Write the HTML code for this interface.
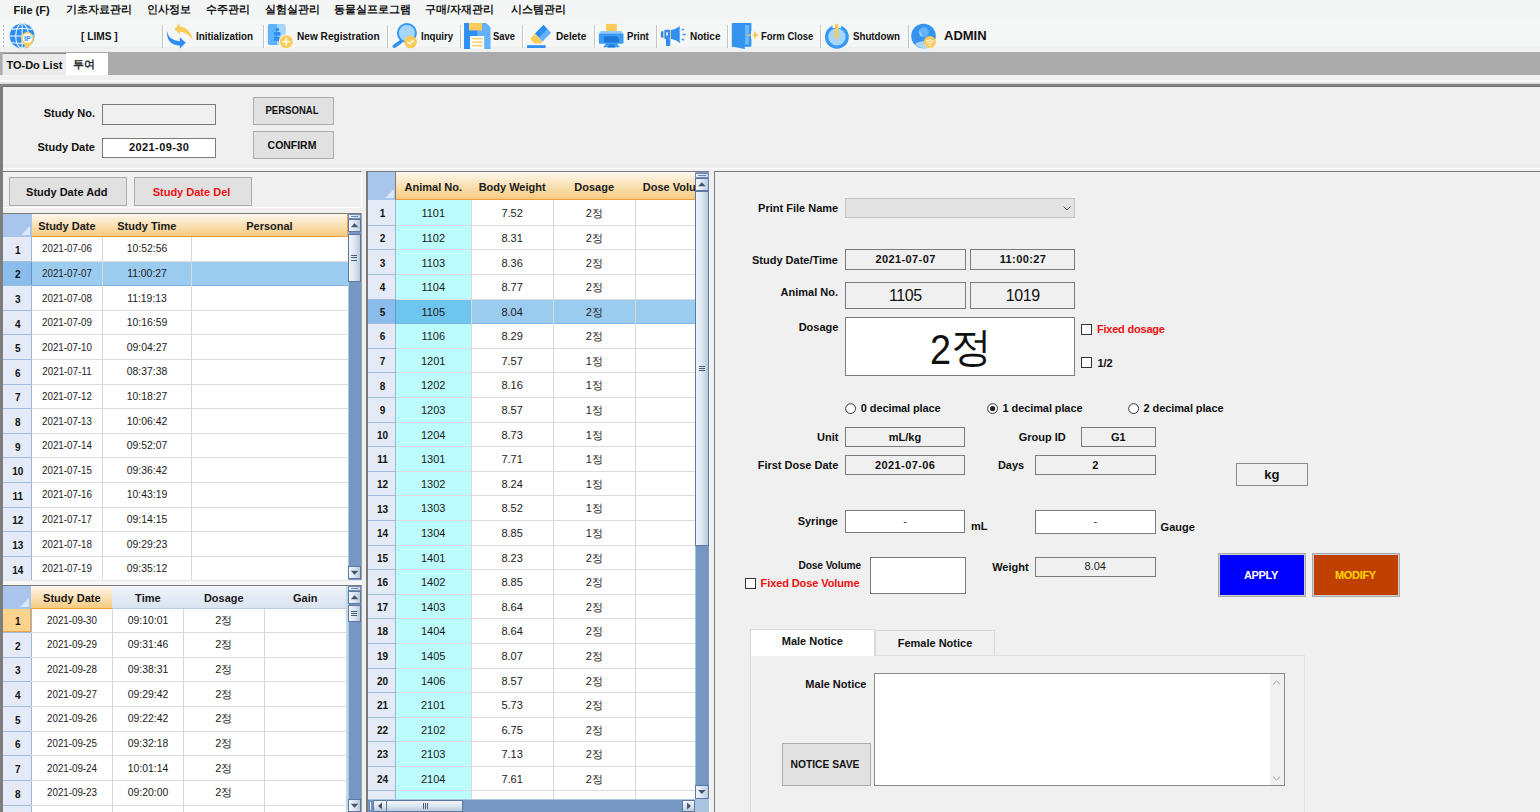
<!DOCTYPE html>
<html><head><meta charset="utf-8"><title>LIMS</title>
<style>
html,body{margin:0;padding:0;}
body{width:1540px;height:812px;overflow:hidden;position:relative;background:#f0f0f0;font-family:"Liberation Sans",sans-serif;}
div{box-sizing:border-box;}
</style></head><body>

<div style="position:absolute;left:0px;top:0px;width:1540px;height:20px;background:#f4f5f5;"></div>
<div style="position:absolute;left:13.6px;top:3.95px;line-height:12.287px;font-size:11px;font-weight:bold;color:#111;white-space:pre;">File (F)</div>
<div style="position:absolute;left:66px;top:4.31px;line-height:11.84px;font-size:10.6px;font-weight:bold;color:#111;white-space:pre;">기초자료관리</div>
<div style="position:absolute;left:146.5px;top:4.31px;line-height:11.84px;font-size:10.6px;font-weight:bold;color:#111;white-space:pre;">인사정보</div>
<div style="position:absolute;left:205.5px;top:4.31px;line-height:11.84px;font-size:10.6px;font-weight:bold;color:#111;white-space:pre;">수주관리</div>
<div style="position:absolute;left:264.5px;top:4.31px;line-height:11.84px;font-size:10.6px;font-weight:bold;color:#111;white-space:pre;">실험실관리</div>
<div style="position:absolute;left:334px;top:4.31px;line-height:11.84px;font-size:10.6px;font-weight:bold;color:#111;white-space:pre;">동물실프로그램</div>
<div style="position:absolute;left:425px;top:4.31px;line-height:11.84px;font-size:10.6px;font-weight:bold;color:#111;white-space:pre;">구매/자재관리</div>
<div style="position:absolute;left:511px;top:4.31px;line-height:11.84px;font-size:10.6px;font-weight:bold;color:#111;white-space:pre;">시스템관리</div>
<div style="position:absolute;left:0px;top:20px;width:1540px;height:32px;background:#f5f6f6;"></div>
<div style="position:absolute;left:0px;top:47px;width:1540px;height:5px;background:#eff0f0;"></div>
<div style="position:absolute;left:3px;top:25px;width:1px;height:2px;background:#b0b0b0;"></div>
<div style="position:absolute;left:3px;top:29px;width:1px;height:2px;background:#b0b0b0;"></div>
<div style="position:absolute;left:3px;top:33px;width:1px;height:2px;background:#b0b0b0;"></div>
<div style="position:absolute;left:3px;top:37px;width:1px;height:2px;background:#b0b0b0;"></div>
<div style="position:absolute;left:3px;top:41px;width:1px;height:2px;background:#b0b0b0;"></div>
<div style="position:absolute;left:3px;top:45px;width:1px;height:2px;background:#b0b0b0;"></div>
<div style="position:absolute;left:161.8px;top:24.7px;width:1px;height:23.5px;background:#c4c4c4;"></div>
<div style="position:absolute;left:162.8px;top:24.7px;width:1px;height:23.5px;background:#ffffff;"></div>
<div style="position:absolute;left:262.8px;top:24.7px;width:1px;height:23.5px;background:#c4c4c4;"></div>
<div style="position:absolute;left:263.8px;top:24.7px;width:1px;height:23.5px;background:#ffffff;"></div>
<div style="position:absolute;left:386.8px;top:24.7px;width:1px;height:23.5px;background:#c4c4c4;"></div>
<div style="position:absolute;left:387.8px;top:24.7px;width:1px;height:23.5px;background:#ffffff;"></div>
<div style="position:absolute;left:460px;top:24.7px;width:1px;height:23.5px;background:#c4c4c4;"></div>
<div style="position:absolute;left:461px;top:24.7px;width:1px;height:23.5px;background:#ffffff;"></div>
<div style="position:absolute;left:522.3px;top:24.7px;width:1px;height:23.5px;background:#c4c4c4;"></div>
<div style="position:absolute;left:523.3px;top:24.7px;width:1px;height:23.5px;background:#ffffff;"></div>
<div style="position:absolute;left:593.9px;top:24.7px;width:1px;height:23.5px;background:#c4c4c4;"></div>
<div style="position:absolute;left:594.9px;top:24.7px;width:1px;height:23.5px;background:#ffffff;"></div>
<div style="position:absolute;left:655.7px;top:24.7px;width:1px;height:23.5px;background:#c4c4c4;"></div>
<div style="position:absolute;left:656.7px;top:24.7px;width:1px;height:23.5px;background:#ffffff;"></div>
<div style="position:absolute;left:727.3px;top:24.7px;width:1px;height:23.5px;background:#c4c4c4;"></div>
<div style="position:absolute;left:728.3px;top:24.7px;width:1px;height:23.5px;background:#ffffff;"></div>
<div style="position:absolute;left:819.8px;top:24.7px;width:1px;height:23.5px;background:#c4c4c4;"></div>
<div style="position:absolute;left:820.8px;top:24.7px;width:1px;height:23.5px;background:#ffffff;"></div>
<div style="position:absolute;left:907.9px;top:24.7px;width:1px;height:23.5px;background:#c4c4c4;"></div>
<div style="position:absolute;left:908.9px;top:24.7px;width:1px;height:23.5px;background:#ffffff;"></div>
<div style="position:absolute;left:81.4px;top:30.05px;line-height:12.287px;font-size:11px;font-weight:bold;color:#111;white-space:pre;transform:scaleX(0.922);transform-origin:0 0;">[ LIMS ]</div>
<div style="position:absolute;left:195.5px;top:30.05px;line-height:12.287px;font-size:11px;font-weight:bold;color:#111;white-space:pre;transform:scaleX(0.896);transform-origin:0 0;">Initialization</div>
<div style="position:absolute;left:296.6px;top:30.05px;line-height:12.287px;font-size:11px;font-weight:bold;color:#111;white-space:pre;transform:scaleX(0.919);transform-origin:0 0;">New Registration</div>
<div style="position:absolute;left:420.7px;top:30.05px;line-height:12.287px;font-size:11px;font-weight:bold;color:#111;white-space:pre;transform:scaleX(0.877);transform-origin:0 0;">Inquiry</div>
<div style="position:absolute;left:493px;top:30.05px;line-height:12.287px;font-size:11px;font-weight:bold;color:#111;white-space:pre;transform:scaleX(0.856);transform-origin:0 0;">Save</div>
<div style="position:absolute;left:555.7px;top:30.05px;line-height:12.287px;font-size:11px;font-weight:bold;color:#111;white-space:pre;transform:scaleX(0.918);transform-origin:0 0;">Delete</div>
<div style="position:absolute;left:626.8px;top:30.05px;line-height:12.287px;font-size:11px;font-weight:bold;color:#111;white-space:pre;transform:scaleX(0.869);transform-origin:0 0;">Print</div>
<div style="position:absolute;left:689.6px;top:30.05px;line-height:12.287px;font-size:11px;font-weight:bold;color:#111;white-space:pre;transform:scaleX(0.905);transform-origin:0 0;">Notice</div>
<div style="position:absolute;left:760.7px;top:30.05px;line-height:12.287px;font-size:11px;font-weight:bold;color:#111;white-space:pre;transform:scaleX(0.864);transform-origin:0 0;">Form Close</div>
<div style="position:absolute;left:853px;top:30.05px;line-height:12.287px;font-size:11px;font-weight:bold;color:#111;white-space:pre;transform:scaleX(0.883);transform-origin:0 0;">Shutdown</div>
<div style="position:absolute;left:944px;top:29.44px;line-height:14.521px;font-size:13px;font-weight:bold;color:#111;white-space:pre;">ADMIN</div>
<svg style="position:absolute;left:0;top:0" width="1540" height="52" viewBox="0 0 1540 52">
<!-- globe -->
<g>
<circle cx="22.1" cy="35.9" r="12.4" fill="#2f8ef3"/>
<g fill="none" stroke="#eaf4ff" stroke-width="1.1">
<line x1="22.1" y1="23.5" x2="22.1" y2="48.3"/>
<ellipse cx="22.1" cy="35.9" rx="6.4" ry="12.4"/>
<line x1="9.7" y1="36" x2="34.5" y2="36"/>
<path d="M12 29.4 Q22.1 27.5 32.2 29.4"/>
<path d="M12 42.5 Q22.1 44.3 32.2 42.5"/>
</g>
<path d="M21.2 39.5 A6.3 6.3 0 1 1 33.6 39.5 Q33 43 27.4 48.6 Q21.8 43 21.2 39.5 Z" fill="#fdcb5a"/>
<circle cx="27.4" cy="38.2" r="4.9" fill="#fff"/>
<text x="27.4" y="40.6" font-family="Liberation Sans" font-weight="bold" font-size="7.2" fill="#2f8ef3" text-anchor="middle">IP</text>
</g>
<!-- refresh -->
<path d="M174.4 28.9 L179.8 23.3 L179.8 26.4 Q190.5 27.5 192.7 40.6 Q188.5 32.5 179.8 31.6 L179.8 34.6 Z" fill="#fdcb5a"/>
<path d="M166.9 31 Q168.3 40.5 179.8 41.2 L179.8 37.3 L185.8 42.8 L179.8 48.5 L179.8 45.6 Q166.5 45 166.9 31 Z" fill="#2f8ef3"/>
<!-- new registration -->
<rect x="267.9" y="23.9" width="17.9" height="21.1" rx="2.2" fill="#a6d6fb"/>
<path d="M270.1 23.9 L277 23.9 L277 45 L270.1 45 Q267.9 45 267.9 42.8 L267.9 26.1 Q267.9 23.9 270.1 23.9 Z" fill="#5fb3f9"/>
<circle cx="277.3" cy="29.6" r="1.9" fill="#2f8ef3"/>
<rect x="274.1" y="32.1" width="6.4" height="3.6" rx="1.2" fill="#2f8ef3"/>
<rect x="274.1" y="36.6" width="5.5" height="4.3" fill="#2f8ef3"/>
<circle cx="286.3" cy="41.7" r="7.4" fill="#f5f6f6"/>
<circle cx="286.3" cy="41.7" r="6.5" fill="#fdcb5a"/>
<rect x="282.4" y="41" width="7.8" height="1.5" fill="#fff"/>
<rect x="285.55" y="37.8" width="1.5" height="7.8" fill="#fff"/>
<!-- inquiry -->
<line x1="401" y1="41.5" x2="394.2" y2="46.3" stroke="#2f8ef3" stroke-width="3.4" stroke-linecap="round"/>
<circle cx="406.9" cy="33" r="9" fill="#a6d6fb" stroke="#3399f5" stroke-width="2"/>
<circle cx="410.6" cy="42" r="6.3" fill="#fdcb5a"/>
<path d="M407.5 41.8 L409.8 44 L413.6 40" fill="none" stroke="#fff" stroke-width="1.4"/>
<!-- save -->
<path d="M464.1 23 L486.2 23 L490.5 27.3 L490.5 48.9 L464.1 48.9 Z" fill="#62b3f9"/>
<path d="M464.1 23 L477.2 23 L477.2 36 L469.8 36 L469.8 48.9 L464.1 48.9 Z" fill="#2f8ef3"/>
<rect x="469" y="23" width="13" height="7.4" fill="#fdcb5a"/>
<rect x="470.1" y="36" width="14.1" height="12.9" fill="#fff"/>
<g stroke="#fdcb5a" stroke-width="1.5"><line x1="472.3" y1="38.6" x2="482.6" y2="38.6"/><line x1="472.3" y1="42.1" x2="482.6" y2="42.1"/><line x1="472.3" y1="45.6" x2="482.6" y2="45.6"/></g>
<!-- delete -->
<path d="M543.5 25.1 L551.1 32.8 L542.3 41.7 L535 33.6 Z" fill="#62b3f9"/>
<path d="M543.5 25.1 L547.3 28.9 L538.8 37.6 L535 33.6 Z" fill="#2f8ef3"/>
<path d="M535 33.6 L542.3 41.7 L541 43.5 L534.5 43.5 L531.2 40.3 Q530 38.6 531.2 37.4 Z" fill="#fdcb5a"/>
<rect x="527.1" y="45.2" width="18.5" height="2.8" fill="#2f8ef3"/>
<!-- print -->
<rect x="606" y="23.9" width="10.8" height="7.5" fill="#fdcb5a"/>
<path d="M601 31 L621.5 31 L623.5 33.8 L598.9 33.8 Z" fill="#8fcbfb"/>
<rect x="598.9" y="33.5" width="24.6" height="10.2" rx="1" fill="#3a9cf5"/>
<path d="M604 36.3 L616.5 36.3 L619 39 L619 42.6 L604 42.6 Z" fill="#1b79d8"/>
<path d="M603 47.2 L606.5 43 L616.5 43 L620 47.2 Z" fill="#3a9cf5"/>
<path d="M607.5 47.4 L609.3 44.4 L613.8 44.4 L615.5 47.4 Z" fill="#1b79d8"/>
<!-- notice megaphone -->
<rect x="660.9" y="31.2" width="2.6" height="6.5" rx="0.8" fill="#2f8ef3"/>
<rect x="663.5" y="30" width="0.9" height="9" fill="#fdcb5a"/>
<rect x="664.4" y="29.8" width="5.6" height="9.1" rx="0.8" fill="#2f8ef3"/>
<rect x="666.3" y="32.4" width="1.6" height="3.2" fill="#fff"/>
<rect x="670" y="29.3" width="0.9" height="10" fill="#fdcb5a"/>
<path d="M670.9 30 Q676 29.5 679.6 26 L679.8 43.2 Q676 39.5 670.9 39 Z" fill="#2f8ef3"/>
<rect x="666" y="39.1" width="4.3" height="6.8" rx="0.6" fill="#2f8ef3"/>
<g stroke="#2f8ef3" stroke-width="1.3" stroke-linecap="round"><line x1="682.2" y1="30" x2="683.6" y2="29.3"/><line x1="683.2" y1="34.5" x2="685.2" y2="34.5"/><line x1="682.2" y1="39.2" x2="683.6" y2="39.9"/></g>
<!-- form close -->
<rect x="731.9" y="23" width="19.5" height="23.8" rx="0.8" fill="#3391ef"/>
<rect x="744.6" y="25" width="4.5" height="19.6" fill="#69b8fb"/>
<path d="M731.9 23 L742.5 25 L744.8 25.2 L744.8 49 L731.9 46.6 Z" fill="#3493ef"/>
<path d="M747.2 34.4 L754 34.4 L754 31 L758.3 35 L754 39.1 L754 35.8 L747.2 35.8 Z" fill="#fdcb5a"/>
<rect x="751" y="31" width="1.5" height="8" fill="#f5f6f6"/>
<!-- shutdown -->
<circle cx="836.9" cy="36.9" r="10.3" fill="#a6d6fb" stroke="#3399f5" stroke-width="3.2"/>
<rect x="832.5" y="22" width="8.6" height="6" fill="#f5f6f6"/>
<rect x="834.9" y="23.9" width="3.4" height="14.8" fill="#fdcb5a"/>
<!-- admin -->
<circle cx="923.5" cy="36" r="12.3" fill="#3594ef"/>
<circle cx="923.8" cy="32.2" r="5" fill="#62b3f9"/>
<path d="M919.6 29.9 Q918 34.5 922.6 37.1 Z" fill="#a6d6fb"/>
<path d="M914.8 44.3 Q919 40.5 925 41.5 L929 48 Q920 49.5 914.8 44.3 Z" fill="#a6d6fb"/>
<circle cx="929.8" cy="42" r="6" fill="#fdcb5a"/>
<g fill="none" stroke="#fff" stroke-width="1" stroke-linecap="round">
<path d="M926.3 41.3 Q929.8 38.3 933.3 41.3"/><path d="M927.6 43 Q929.8 41.2 932 43"/></g>
<circle cx="929.8" cy="45.2" r="0.9" fill="#fff"/>
</svg>
<div style="position:absolute;left:0px;top:52.4px;width:1540px;height:22.4px;background:#ababab;"></div>
<div style="position:absolute;left:2px;top:53px;width:64px;height:22px;background:#ebebeb;border-top:1px solid #8e8e8e;border-left:1px solid #c9c9c9;"></div>
<div style="position:absolute;left:6.4px;top:58.64px;line-height:12.287px;font-size:11px;font-weight:bold;color:#111;white-space:pre;">TO-Do List</div>
<div style="position:absolute;left:66px;top:53px;width:42px;height:22.5px;background:#ffffff;"></div>
<div style="position:absolute;left:72.6px;top:57.64px;line-height:12.287px;font-size:11px;font-weight:normal;color:#111;white-space:pre;-webkit-text-stroke:0.35px #111;">투여</div>
<div style="position:absolute;left:0px;top:75px;width:1540px;height:5.5px;background:#f0f0f0;"></div>
<div style="position:absolute;left:0px;top:80px;width:1540px;height:1.5px;background:#fafafa;"></div>
<div style="position:absolute;left:0px;top:81.5px;width:1540px;height:2.5px;background:#e2e2e2;"></div>
<div style="position:absolute;left:0px;top:84px;width:1540px;height:3px;background:#8e8e8e;border-top:1px solid #777;border-bottom:1px solid #6c6c6c;"></div>
<div style="position:absolute;left:0px;top:86px;width:2.5px;height:726px;background:#7d7d7d;"></div>
<div style="position:absolute;left:-305px;width:400px;text-align:right;top:107.45px;line-height:12.287px;font-size:11px;font-weight:bold;color:#111;white-space:pre;">Study No.</div>
<div style="position:absolute;left:102.2px;top:104.4px;width:113.6px;height:20.2px;background:#f0f0f0;border:1px solid #7a7a7a;"></div>
<div style="position:absolute;left:-305px;width:400px;text-align:right;top:141.24px;line-height:12.287px;font-size:11px;font-weight:bold;color:#111;white-space:pre;">Study Date</div>
<div style="position:absolute;left:102.2px;top:138.1px;width:113.6px;height:19.9px;background:#ffffff;border:1px solid #7a7a7a;"></div>
<div style="position:absolute;left:-41.0px;width:400px;text-align:center;top:140.84px;line-height:12.287px;font-size:11px;font-weight:bold;color:#111;white-space:pre;letter-spacing:0.4px;text-indent:0.4px;">2021-09-30</div>
<div style="position:absolute;left:253px;top:97.1px;width:81px;height:27.5px;background:#e1e1e1;border:1px solid #adadad;"></div>
<div style="position:absolute;left:92.2px;width:400px;text-align:center;top:104.14px;line-height:12.287px;font-size:11px;font-weight:bold;color:#111;white-space:pre;transform:scaleX(0.87);">PERSONAL</div>
<div style="position:absolute;left:253px;top:131px;width:81px;height:27.7px;background:#e1e1e1;border:1px solid #adadad;"></div>
<div style="position:absolute;left:91.7px;width:400px;text-align:center;top:139.24px;line-height:12.287px;font-size:11px;font-weight:bold;color:#111;white-space:pre;transform:scaleX(0.95);">CONFIRM</div>
<div style="position:absolute;left:2.5px;top:162px;width:1537.5px;height:9px;background:#f0f0f0;"></div>
<div style="position:absolute;left:2.5px;top:165px;width:1537.5px;height:1px;background:#eaeaea;"></div>
<div style="position:absolute;left:2.5px;top:168px;width:1537.5px;height:1px;background:#fbfbfb;"></div>
<div style="position:absolute;left:2.5px;top:171.3px;width:359px;height:37px;background:#f0f0f0;border-top:1px solid #7a7a7a;border-bottom:1px solid #ffffff;border-right:1px solid #ffffff;"></div>
<div style="position:absolute;left:9.3px;top:177.2px;width:117.3px;height:28.4px;background:#e1e1e1;border:1px solid #adadad;"></div>
<div style="position:absolute;left:-133.2px;width:400px;text-align:center;top:185.54px;line-height:12.287px;font-size:11px;font-weight:bold;color:#111;white-space:pre;">Study Date Add</div>
<div style="position:absolute;left:134.2px;top:177.2px;width:117.4px;height:28.4px;background:#e1e1e1;border:1px solid #adadad;"></div>
<div style="position:absolute;left:-8.5px;width:400px;text-align:center;top:185.54px;line-height:12.287px;font-size:11px;font-weight:bold;color:#ee1111;white-space:pre;">Study Date Del</div>
<div style="position:absolute;left:2.5px;top:212.5px;width:359px;height:1px;background:#7a7a7a;"></div>
<div style="position:absolute;left:3px;top:236.5px;width:344.5px;height:343.0px;background:#fff;overflow:hidden;"></div>
<div style="position:absolute;left:3px;top:236.5px;width:29.0px;height:343.0px;background:#e4ebf7;border-right:1px solid #9fb7d6;"></div>
<div style="position:absolute;left:31.5px;top:260.6px;width:316.0px;height:1px;background:#dcdcdc;"></div>
<div style="position:absolute;left:3px;top:260.6px;width:28.5px;height:1px;background:#a3bad8;"></div>
<div style="position:absolute;left:-182.15px;width:400px;text-align:center;top:244.75px;line-height:11.17px;font-size:10px;font-weight:bold;color:#111;white-space:pre;">1</div>
<div style="position:absolute;left:-133.15px;width:400px;text-align:center;top:242.44px;line-height:12.287px;font-size:11px;font-weight:normal;color:#1a1a1a;white-space:pre;transform:scaleX(0.888);">2021-07-06</div>
<div style="position:absolute;left:-53.2px;width:400px;text-align:center;top:242.44px;line-height:12.287px;font-size:11px;font-weight:normal;color:#1a1a1a;white-space:pre;transform:scaleX(0.944);">10:52:56</div>
<div style="position:absolute;left:31.5px;top:261.6px;width:316.0px;height:24.600000000000023px;background:#9ccbf0;"></div>
<div style="position:absolute;left:3px;top:261.6px;width:29.0px;height:24.600000000000023px;background:#8abdeb;border-right:1px solid #5f95c9;"></div>
<div style="position:absolute;left:31.5px;top:285.20000000000005px;width:316.0px;height:1px;background:#7fb2e0;"></div>
<div style="position:absolute;left:3px;top:285.20000000000005px;width:28.5px;height:1px;background:#a3bad8;"></div>
<div style="position:absolute;left:-182.15px;width:400px;text-align:center;top:269.35px;line-height:11.17px;font-size:10px;font-weight:bold;color:#111;white-space:pre;">2</div>
<div style="position:absolute;left:-133.15px;width:400px;text-align:center;top:267.05px;line-height:12.287px;font-size:11px;font-weight:normal;color:#1a1a1a;white-space:pre;transform:scaleX(0.888);">2021-07-07</div>
<div style="position:absolute;left:-53.2px;width:400px;text-align:center;top:267.05px;line-height:12.287px;font-size:11px;font-weight:normal;color:#1a1a1a;white-space:pre;transform:scaleX(0.944);">11:00:27</div>
<div style="position:absolute;left:31.5px;top:309.80000000000007px;width:316.0px;height:1px;background:#dcdcdc;"></div>
<div style="position:absolute;left:3px;top:309.80000000000007px;width:28.5px;height:1px;background:#a3bad8;"></div>
<div style="position:absolute;left:-182.15px;width:400px;text-align:center;top:293.95px;line-height:11.17px;font-size:10px;font-weight:bold;color:#111;white-space:pre;">3</div>
<div style="position:absolute;left:-133.15px;width:400px;text-align:center;top:291.65px;line-height:12.287px;font-size:11px;font-weight:normal;color:#1a1a1a;white-space:pre;transform:scaleX(0.888);">2021-07-08</div>
<div style="position:absolute;left:-53.2px;width:400px;text-align:center;top:291.65px;line-height:12.287px;font-size:11px;font-weight:normal;color:#1a1a1a;white-space:pre;transform:scaleX(0.944);">11:19:13</div>
<div style="position:absolute;left:31.5px;top:334.4000000000001px;width:316.0px;height:1px;background:#dcdcdc;"></div>
<div style="position:absolute;left:3px;top:334.4000000000001px;width:28.5px;height:1px;background:#a3bad8;"></div>
<div style="position:absolute;left:-182.15px;width:400px;text-align:center;top:318.55px;line-height:11.17px;font-size:10px;font-weight:bold;color:#111;white-space:pre;">4</div>
<div style="position:absolute;left:-133.15px;width:400px;text-align:center;top:316.25px;line-height:12.287px;font-size:11px;font-weight:normal;color:#1a1a1a;white-space:pre;transform:scaleX(0.888);">2021-07-09</div>
<div style="position:absolute;left:-53.2px;width:400px;text-align:center;top:316.25px;line-height:12.287px;font-size:11px;font-weight:normal;color:#1a1a1a;white-space:pre;transform:scaleX(0.944);">10:16:59</div>
<div style="position:absolute;left:31.5px;top:359.0000000000001px;width:316.0px;height:1px;background:#dcdcdc;"></div>
<div style="position:absolute;left:3px;top:359.0000000000001px;width:28.5px;height:1px;background:#a3bad8;"></div>
<div style="position:absolute;left:-182.15px;width:400px;text-align:center;top:343.15px;line-height:11.17px;font-size:10px;font-weight:bold;color:#111;white-space:pre;">5</div>
<div style="position:absolute;left:-133.15px;width:400px;text-align:center;top:340.85px;line-height:12.287px;font-size:11px;font-weight:normal;color:#1a1a1a;white-space:pre;transform:scaleX(0.888);">2021-07-10</div>
<div style="position:absolute;left:-53.2px;width:400px;text-align:center;top:340.85px;line-height:12.287px;font-size:11px;font-weight:normal;color:#1a1a1a;white-space:pre;transform:scaleX(0.944);">09:04:27</div>
<div style="position:absolute;left:31.5px;top:383.60000000000014px;width:316.0px;height:1px;background:#dcdcdc;"></div>
<div style="position:absolute;left:3px;top:383.60000000000014px;width:28.5px;height:1px;background:#a3bad8;"></div>
<div style="position:absolute;left:-182.15px;width:400px;text-align:center;top:367.75px;line-height:11.17px;font-size:10px;font-weight:bold;color:#111;white-space:pre;">6</div>
<div style="position:absolute;left:-133.15px;width:400px;text-align:center;top:365.45px;line-height:12.287px;font-size:11px;font-weight:normal;color:#1a1a1a;white-space:pre;transform:scaleX(0.888);">2021-07-11</div>
<div style="position:absolute;left:-53.2px;width:400px;text-align:center;top:365.45px;line-height:12.287px;font-size:11px;font-weight:normal;color:#1a1a1a;white-space:pre;transform:scaleX(0.944);">08:37:38</div>
<div style="position:absolute;left:31.5px;top:408.20000000000016px;width:316.0px;height:1px;background:#dcdcdc;"></div>
<div style="position:absolute;left:3px;top:408.20000000000016px;width:28.5px;height:1px;background:#a3bad8;"></div>
<div style="position:absolute;left:-182.15px;width:400px;text-align:center;top:392.35px;line-height:11.17px;font-size:10px;font-weight:bold;color:#111;white-space:pre;">7</div>
<div style="position:absolute;left:-133.15px;width:400px;text-align:center;top:390.05px;line-height:12.287px;font-size:11px;font-weight:normal;color:#1a1a1a;white-space:pre;transform:scaleX(0.888);">2021-07-12</div>
<div style="position:absolute;left:-53.2px;width:400px;text-align:center;top:390.05px;line-height:12.287px;font-size:11px;font-weight:normal;color:#1a1a1a;white-space:pre;transform:scaleX(0.944);">10:18:27</div>
<div style="position:absolute;left:31.5px;top:432.8000000000002px;width:316.0px;height:1px;background:#dcdcdc;"></div>
<div style="position:absolute;left:3px;top:432.8000000000002px;width:28.5px;height:1px;background:#a3bad8;"></div>
<div style="position:absolute;left:-182.15px;width:400px;text-align:center;top:416.95px;line-height:11.17px;font-size:10px;font-weight:bold;color:#111;white-space:pre;">8</div>
<div style="position:absolute;left:-133.15px;width:400px;text-align:center;top:414.65px;line-height:12.287px;font-size:11px;font-weight:normal;color:#1a1a1a;white-space:pre;transform:scaleX(0.888);">2021-07-13</div>
<div style="position:absolute;left:-53.2px;width:400px;text-align:center;top:414.65px;line-height:12.287px;font-size:11px;font-weight:normal;color:#1a1a1a;white-space:pre;transform:scaleX(0.944);">10:06:42</div>
<div style="position:absolute;left:31.5px;top:457.4000000000002px;width:316.0px;height:1px;background:#dcdcdc;"></div>
<div style="position:absolute;left:3px;top:457.4000000000002px;width:28.5px;height:1px;background:#a3bad8;"></div>
<div style="position:absolute;left:-182.15px;width:400px;text-align:center;top:441.55px;line-height:11.17px;font-size:10px;font-weight:bold;color:#111;white-space:pre;">9</div>
<div style="position:absolute;left:-133.15px;width:400px;text-align:center;top:439.25px;line-height:12.287px;font-size:11px;font-weight:normal;color:#1a1a1a;white-space:pre;transform:scaleX(0.888);">2021-07-14</div>
<div style="position:absolute;left:-53.2px;width:400px;text-align:center;top:439.25px;line-height:12.287px;font-size:11px;font-weight:normal;color:#1a1a1a;white-space:pre;transform:scaleX(0.944);">09:52:07</div>
<div style="position:absolute;left:31.5px;top:482.0000000000002px;width:316.0px;height:1px;background:#dcdcdc;"></div>
<div style="position:absolute;left:3px;top:482.0000000000002px;width:28.5px;height:1px;background:#a3bad8;"></div>
<div style="position:absolute;left:-182.15px;width:400px;text-align:center;top:466.15px;line-height:11.17px;font-size:10px;font-weight:bold;color:#111;white-space:pre;">10</div>
<div style="position:absolute;left:-133.15px;width:400px;text-align:center;top:463.85px;line-height:12.287px;font-size:11px;font-weight:normal;color:#1a1a1a;white-space:pre;transform:scaleX(0.888);">2021-07-15</div>
<div style="position:absolute;left:-53.2px;width:400px;text-align:center;top:463.85px;line-height:12.287px;font-size:11px;font-weight:normal;color:#1a1a1a;white-space:pre;transform:scaleX(0.944);">09:36:42</div>
<div style="position:absolute;left:31.5px;top:506.60000000000025px;width:316.0px;height:1px;background:#dcdcdc;"></div>
<div style="position:absolute;left:3px;top:506.60000000000025px;width:28.5px;height:1px;background:#a3bad8;"></div>
<div style="position:absolute;left:-182.15px;width:400px;text-align:center;top:490.75px;line-height:11.17px;font-size:10px;font-weight:bold;color:#111;white-space:pre;">11</div>
<div style="position:absolute;left:-133.15px;width:400px;text-align:center;top:488.45px;line-height:12.287px;font-size:11px;font-weight:normal;color:#1a1a1a;white-space:pre;transform:scaleX(0.888);">2021-07-16</div>
<div style="position:absolute;left:-53.2px;width:400px;text-align:center;top:488.45px;line-height:12.287px;font-size:11px;font-weight:normal;color:#1a1a1a;white-space:pre;transform:scaleX(0.944);">10:43:19</div>
<div style="position:absolute;left:31.5px;top:531.2000000000003px;width:316.0px;height:1px;background:#dcdcdc;"></div>
<div style="position:absolute;left:3px;top:531.2000000000003px;width:28.5px;height:1px;background:#a3bad8;"></div>
<div style="position:absolute;left:-182.15px;width:400px;text-align:center;top:515.35px;line-height:11.17px;font-size:10px;font-weight:bold;color:#111;white-space:pre;">12</div>
<div style="position:absolute;left:-133.15px;width:400px;text-align:center;top:513.05px;line-height:12.287px;font-size:11px;font-weight:normal;color:#1a1a1a;white-space:pre;transform:scaleX(0.888);">2021-07-17</div>
<div style="position:absolute;left:-53.2px;width:400px;text-align:center;top:513.05px;line-height:12.287px;font-size:11px;font-weight:normal;color:#1a1a1a;white-space:pre;transform:scaleX(0.944);">09:14:15</div>
<div style="position:absolute;left:31.5px;top:555.8000000000003px;width:316.0px;height:1px;background:#dcdcdc;"></div>
<div style="position:absolute;left:3px;top:555.8000000000003px;width:28.5px;height:1px;background:#a3bad8;"></div>
<div style="position:absolute;left:-182.15px;width:400px;text-align:center;top:539.95px;line-height:11.17px;font-size:10px;font-weight:bold;color:#111;white-space:pre;">13</div>
<div style="position:absolute;left:-133.15px;width:400px;text-align:center;top:537.65px;line-height:12.287px;font-size:11px;font-weight:normal;color:#1a1a1a;white-space:pre;transform:scaleX(0.888);">2021-07-18</div>
<div style="position:absolute;left:-53.2px;width:400px;text-align:center;top:537.65px;line-height:12.287px;font-size:11px;font-weight:normal;color:#1a1a1a;white-space:pre;transform:scaleX(0.944);">09:29:23</div>
<div style="position:absolute;left:-182.15px;width:400px;text-align:center;top:564.55px;line-height:11.17px;font-size:10px;font-weight:bold;color:#111;white-space:pre;">14</div>
<div style="position:absolute;left:-133.15px;width:400px;text-align:center;top:562.25px;line-height:12.287px;font-size:11px;font-weight:normal;color:#1a1a1a;white-space:pre;transform:scaleX(0.888);">2021-07-19</div>
<div style="position:absolute;left:-53.2px;width:400px;text-align:center;top:562.25px;line-height:12.287px;font-size:11px;font-weight:normal;color:#1a1a1a;white-space:pre;transform:scaleX(0.944);">09:35:12</div>
<div style="position:absolute;left:101.7px;top:236.5px;width:1px;height:343.0px;background:#d9d9d9;"></div>
<div style="position:absolute;left:190.9px;top:236.5px;width:1px;height:343.0px;background:#d9d9d9;"></div>
<div style="position:absolute;left:31.5px;top:213.5px;width:71.2px;height:23.0px;background:linear-gradient(180deg,#fef8ee 0%,#fae3bb 45%,#f6cb7f 100%);border-bottom:1.5px solid #f2a03c;border-right:1px solid #f4a548;"></div>
<div style="position:absolute;left:-133.15px;width:400px;text-align:center;top:220.04px;line-height:12.287px;font-size:11px;font-weight:bold;color:#1b1b1b;white-space:pre;">Study Date</div>
<div style="position:absolute;left:102.2px;top:213.5px;width:89.7px;height:23.0px;background:linear-gradient(180deg,#fef8ee 0%,#fae3bb 45%,#f6cb7f 100%);border-bottom:1.5px solid #f2a03c;border-right:1px solid #f4a548;"></div>
<div style="position:absolute;left:-53.2px;width:400px;text-align:center;top:220.04px;line-height:12.287px;font-size:11px;font-weight:bold;color:#1b1b1b;white-space:pre;">Study Time</div>
<div style="position:absolute;left:191.4px;top:213.5px;width:156.6px;height:23.0px;background:linear-gradient(180deg,#fef8ee 0%,#fae3bb 45%,#f6cb7f 100%);border-bottom:1.5px solid #f2a03c;border-right:1px solid #f4a548;"></div>
<div style="position:absolute;left:69.45px;width:400px;text-align:center;top:220.04px;line-height:12.287px;font-size:11px;font-weight:bold;color:#1b1b1b;white-space:pre;">Personal</div>
<div style="position:absolute;left:3px;top:213.5px;width:28.5px;height:23.0px;background:#a9c5eb;"></div>
<div style="position:absolute;left:3px;top:213.5px;width:28.5px;height:23.0px;background-image:radial-gradient(#bcd0ee 0.5px,transparent 0.6px);background-size:6px 6px;opacity:0.6"></div>
<svg style="position:absolute;left:19.5px;top:224.5px" width="11" height="11"><path d="M10 1 L10 10 L1 10 Z" fill="#dbe7f6"/></svg>
<div style="position:absolute;left:347.5px;top:213.5px;width:13.2px;height:366.0px;background:#7597c1;border-left:1px solid #a9c6e0;"></div>
<div style="position:absolute;left:347.5px;top:214.0px;width:13.2px;height:5px;background:linear-gradient(90deg,#eef3f9,#c7d5e6);border:1px solid #6d8bb4;"></div>
<div style="position:absolute;left:350.5px;top:216.0px;width:7.199999999999999px;height:1px;background:#6d8bb4;"></div>
<div style="position:absolute;left:347.5px;top:219.1px;width:13.2px;height:13px;background:linear-gradient(90deg,#f3f6fa 0%,#dbe4ef 55%,#b9c9dc 100%);border:1px solid #5b79a3;"></div>
<svg style="position:absolute;left:347.5px;top:219.1px" width="13.2" height="13"><path d="M2.8 8.3 L6.6 4.3 L10.399999999999999 8.3 Z" fill="#46566d"/></svg>
<div style="position:absolute;left:347.5px;top:233.8px;width:13.2px;height:48.19999999999999px;background:linear-gradient(90deg,#f1f5fa 0%,#dde6f1 50%,#b9c8dc 100%);border:1px solid #5b79a3;"></div>
<div style="position:absolute;left:351.0px;top:255.2px;width:6.199999999999999px;height:1px;background:#4a5c75;"></div>
<div style="position:absolute;left:351.0px;top:257.4px;width:6.199999999999999px;height:1px;background:#4a5c75;"></div>
<div style="position:absolute;left:351.0px;top:259.59999999999997px;width:6.199999999999999px;height:1px;background:#4a5c75;"></div>
<div style="position:absolute;left:347.5px;top:565.8px;width:13.2px;height:13px;background:linear-gradient(90deg,#f3f6fa 0%,#dbe4ef 55%,#b9c9dc 100%);border:1px solid #5b79a3;"></div>
<svg style="position:absolute;left:347.5px;top:565.8px" width="13.2" height="13"><path d="M2.8 4.7 L6.6 8.7 L10.399999999999999 4.7 Z" fill="#46566d"/></svg>
<div style="position:absolute;left:360.7px;top:212.5px;width:1px;height:367px;background:#a0a0a0;"></div>
<div style="position:absolute;left:2.5px;top:579.5px;width:359px;height:5.5px;background:#f7f7f7;border-top:1px solid #e8e8e8;"></div>
<div style="position:absolute;left:2.5px;top:584.6px;width:359px;height:1px;background:#7a7a7a;"></div>
<div style="position:absolute;left:3px;top:608.8px;width:343.2px;height:203.20000000000005px;background:#fff;overflow:hidden;"></div>
<div style="position:absolute;left:3px;top:608.8px;width:28.7px;height:203.20000000000005px;background:#e4ebf7;border-right:1px solid #9fb7d6;"></div>
<div style="position:absolute;left:3px;top:607.6px;width:28.2px;height:24.700000000000045px;background:#fcd38c;border-right:1px solid #f2a240;border-bottom:1px solid #f2a240;"></div>
<div style="position:absolute;left:31.2px;top:631.8000000000001px;width:315.0px;height:1px;background:#dcdcdc;"></div>
<div style="position:absolute;left:3px;top:631.8000000000001px;width:28.2px;height:1px;background:#a3bad8;"></div>
<div style="position:absolute;left:-182.3px;width:400px;text-align:center;top:615.85px;line-height:11.17px;font-size:10px;font-weight:bold;color:#111;white-space:pre;">1</div>
<div style="position:absolute;left:-128.2px;width:400px;text-align:center;top:613.54px;line-height:12.287px;font-size:11px;font-weight:normal;color:#1a1a1a;white-space:pre;transform:scaleX(0.888);">2021-09-30</div>
<div style="position:absolute;left:-52.15px;width:400px;text-align:center;top:613.54px;line-height:12.287px;font-size:11px;font-weight:normal;color:#1a1a1a;white-space:pre;transform:scaleX(0.944);">09:10:01</div>
<div style="position:absolute;left:23.8px;width:400px;text-align:center;top:613.54px;line-height:12.287px;font-size:11px;font-weight:normal;color:#1a1a1a;white-space:pre;">2정</div>
<div style="position:absolute;left:31.2px;top:656.5000000000001px;width:315.0px;height:1px;background:#dcdcdc;"></div>
<div style="position:absolute;left:3px;top:656.5000000000001px;width:28.2px;height:1px;background:#a3bad8;"></div>
<div style="position:absolute;left:-182.3px;width:400px;text-align:center;top:640.55px;line-height:11.17px;font-size:10px;font-weight:bold;color:#111;white-space:pre;">2</div>
<div style="position:absolute;left:-128.2px;width:400px;text-align:center;top:638.25px;line-height:12.287px;font-size:11px;font-weight:normal;color:#1a1a1a;white-space:pre;transform:scaleX(0.888);">2021-09-29</div>
<div style="position:absolute;left:-52.15px;width:400px;text-align:center;top:638.25px;line-height:12.287px;font-size:11px;font-weight:normal;color:#1a1a1a;white-space:pre;transform:scaleX(0.944);">09:31:46</div>
<div style="position:absolute;left:23.8px;width:400px;text-align:center;top:638.25px;line-height:12.287px;font-size:11px;font-weight:normal;color:#1a1a1a;white-space:pre;">2정</div>
<div style="position:absolute;left:31.2px;top:681.2000000000002px;width:315.0px;height:1px;background:#dcdcdc;"></div>
<div style="position:absolute;left:3px;top:681.2000000000002px;width:28.2px;height:1px;background:#a3bad8;"></div>
<div style="position:absolute;left:-182.3px;width:400px;text-align:center;top:665.25px;line-height:11.17px;font-size:10px;font-weight:bold;color:#111;white-space:pre;">3</div>
<div style="position:absolute;left:-128.2px;width:400px;text-align:center;top:662.95px;line-height:12.287px;font-size:11px;font-weight:normal;color:#1a1a1a;white-space:pre;transform:scaleX(0.888);">2021-09-28</div>
<div style="position:absolute;left:-52.15px;width:400px;text-align:center;top:662.95px;line-height:12.287px;font-size:11px;font-weight:normal;color:#1a1a1a;white-space:pre;transform:scaleX(0.944);">09:38:31</div>
<div style="position:absolute;left:23.8px;width:400px;text-align:center;top:662.95px;line-height:12.287px;font-size:11px;font-weight:normal;color:#1a1a1a;white-space:pre;">2정</div>
<div style="position:absolute;left:31.2px;top:705.9000000000002px;width:315.0px;height:1px;background:#dcdcdc;"></div>
<div style="position:absolute;left:3px;top:705.9000000000002px;width:28.2px;height:1px;background:#a3bad8;"></div>
<div style="position:absolute;left:-182.3px;width:400px;text-align:center;top:689.95px;line-height:11.17px;font-size:10px;font-weight:bold;color:#111;white-space:pre;">4</div>
<div style="position:absolute;left:-128.2px;width:400px;text-align:center;top:687.65px;line-height:12.287px;font-size:11px;font-weight:normal;color:#1a1a1a;white-space:pre;transform:scaleX(0.888);">2021-09-27</div>
<div style="position:absolute;left:-52.15px;width:400px;text-align:center;top:687.65px;line-height:12.287px;font-size:11px;font-weight:normal;color:#1a1a1a;white-space:pre;transform:scaleX(0.944);">09:29:42</div>
<div style="position:absolute;left:23.8px;width:400px;text-align:center;top:687.65px;line-height:12.287px;font-size:11px;font-weight:normal;color:#1a1a1a;white-space:pre;">2정</div>
<div style="position:absolute;left:31.2px;top:730.6000000000003px;width:315.0px;height:1px;background:#dcdcdc;"></div>
<div style="position:absolute;left:3px;top:730.6000000000003px;width:28.2px;height:1px;background:#a3bad8;"></div>
<div style="position:absolute;left:-182.3px;width:400px;text-align:center;top:714.65px;line-height:11.17px;font-size:10px;font-weight:bold;color:#111;white-space:pre;">5</div>
<div style="position:absolute;left:-128.2px;width:400px;text-align:center;top:712.35px;line-height:12.287px;font-size:11px;font-weight:normal;color:#1a1a1a;white-space:pre;transform:scaleX(0.888);">2021-09-26</div>
<div style="position:absolute;left:-52.15px;width:400px;text-align:center;top:712.35px;line-height:12.287px;font-size:11px;font-weight:normal;color:#1a1a1a;white-space:pre;transform:scaleX(0.944);">09:22:42</div>
<div style="position:absolute;left:23.8px;width:400px;text-align:center;top:712.35px;line-height:12.287px;font-size:11px;font-weight:normal;color:#1a1a1a;white-space:pre;">2정</div>
<div style="position:absolute;left:31.2px;top:755.3000000000003px;width:315.0px;height:1px;background:#dcdcdc;"></div>
<div style="position:absolute;left:3px;top:755.3000000000003px;width:28.2px;height:1px;background:#a3bad8;"></div>
<div style="position:absolute;left:-182.3px;width:400px;text-align:center;top:739.35px;line-height:11.17px;font-size:10px;font-weight:bold;color:#111;white-space:pre;">6</div>
<div style="position:absolute;left:-128.2px;width:400px;text-align:center;top:737.05px;line-height:12.287px;font-size:11px;font-weight:normal;color:#1a1a1a;white-space:pre;transform:scaleX(0.888);">2021-09-25</div>
<div style="position:absolute;left:-52.15px;width:400px;text-align:center;top:737.05px;line-height:12.287px;font-size:11px;font-weight:normal;color:#1a1a1a;white-space:pre;transform:scaleX(0.944);">09:32:18</div>
<div style="position:absolute;left:23.8px;width:400px;text-align:center;top:737.05px;line-height:12.287px;font-size:11px;font-weight:normal;color:#1a1a1a;white-space:pre;">2정</div>
<div style="position:absolute;left:31.2px;top:780.0000000000003px;width:315.0px;height:1px;background:#dcdcdc;"></div>
<div style="position:absolute;left:3px;top:780.0000000000003px;width:28.2px;height:1px;background:#a3bad8;"></div>
<div style="position:absolute;left:-182.3px;width:400px;text-align:center;top:764.05px;line-height:11.17px;font-size:10px;font-weight:bold;color:#111;white-space:pre;">7</div>
<div style="position:absolute;left:-128.2px;width:400px;text-align:center;top:761.75px;line-height:12.287px;font-size:11px;font-weight:normal;color:#1a1a1a;white-space:pre;transform:scaleX(0.888);">2021-09-24</div>
<div style="position:absolute;left:-52.15px;width:400px;text-align:center;top:761.75px;line-height:12.287px;font-size:11px;font-weight:normal;color:#1a1a1a;white-space:pre;transform:scaleX(0.944);">10:01:14</div>
<div style="position:absolute;left:23.8px;width:400px;text-align:center;top:761.75px;line-height:12.287px;font-size:11px;font-weight:normal;color:#1a1a1a;white-space:pre;">2정</div>
<div style="position:absolute;left:31.2px;top:804.7000000000004px;width:315.0px;height:1px;background:#dcdcdc;"></div>
<div style="position:absolute;left:3px;top:804.7000000000004px;width:28.2px;height:1px;background:#a3bad8;"></div>
<div style="position:absolute;left:-182.3px;width:400px;text-align:center;top:788.75px;line-height:11.17px;font-size:10px;font-weight:bold;color:#111;white-space:pre;">8</div>
<div style="position:absolute;left:-128.2px;width:400px;text-align:center;top:786.45px;line-height:12.287px;font-size:11px;font-weight:normal;color:#1a1a1a;white-space:pre;transform:scaleX(0.888);">2021-09-23</div>
<div style="position:absolute;left:-52.15px;width:400px;text-align:center;top:786.45px;line-height:12.287px;font-size:11px;font-weight:normal;color:#1a1a1a;white-space:pre;transform:scaleX(0.944);">09:20:00</div>
<div style="position:absolute;left:23.8px;width:400px;text-align:center;top:786.45px;line-height:12.287px;font-size:11px;font-weight:normal;color:#1a1a1a;white-space:pre;">2정</div>
<div style="position:absolute;left:-182.3px;width:400px;text-align:center;top:813.45px;line-height:11.17px;font-size:10px;font-weight:bold;color:#111;white-space:pre;">9</div>
<div style="position:absolute;left:111.9px;top:608.8px;width:1px;height:203.20000000000005px;background:#d9d9d9;"></div>
<div style="position:absolute;left:182.8px;top:608.8px;width:1px;height:203.20000000000005px;background:#d9d9d9;"></div>
<div style="position:absolute;left:263.8px;top:608.8px;width:1px;height:203.20000000000005px;background:#d9d9d9;"></div>
<div style="position:absolute;left:31.2px;top:585.6px;width:81.7px;height:23.199999999999932px;background:linear-gradient(180deg,#fef8ee 0%,#fae3bb 45%,#f6cb7f 100%);border-bottom:1.5px solid #f2a03c;border-right:1px solid #f4a548;"></div>
<div style="position:absolute;left:-128.2px;width:400px;text-align:center;top:592.25px;line-height:12.287px;font-size:11px;font-weight:bold;color:#1b1b1b;white-space:pre;">Study Date</div>
<div style="position:absolute;left:112.4px;top:585.6px;width:71.4px;height:23.199999999999932px;background:linear-gradient(180deg,#f3f6fb 0%,#e4ebf5 50%,#d9e3f0 100%);border-bottom:1.5px solid #b9cbe2;border-right:1px solid #b9cbe2;"></div>
<div style="position:absolute;left:-52.15px;width:400px;text-align:center;top:592.25px;line-height:12.287px;font-size:11px;font-weight:bold;color:#1b1b1b;white-space:pre;">Time</div>
<div style="position:absolute;left:183.3px;top:585.6px;width:81.5px;height:23.199999999999932px;background:linear-gradient(180deg,#f3f6fb 0%,#e4ebf5 50%,#d9e3f0 100%);border-bottom:1.5px solid #b9cbe2;border-right:1px solid #b9cbe2;"></div>
<div style="position:absolute;left:23.8px;width:400px;text-align:center;top:592.25px;line-height:12.287px;font-size:11px;font-weight:bold;color:#1b1b1b;white-space:pre;">Dosage</div>
<div style="position:absolute;left:264.3px;top:585.6px;width:82.39999999999998px;height:23.199999999999932px;background:linear-gradient(180deg,#f3f6fb 0%,#e4ebf5 50%,#d9e3f0 100%);border-bottom:1.5px solid #b9cbe2;border-right:1px solid #b9cbe2;"></div>
<div style="position:absolute;left:105.25px;width:400px;text-align:center;top:592.25px;line-height:12.287px;font-size:11px;font-weight:bold;color:#1b1b1b;white-space:pre;">Gain</div>
<div style="position:absolute;left:3px;top:585.6px;width:28.2px;height:23.199999999999932px;background:#a9c5eb;"></div>
<div style="position:absolute;left:3px;top:585.6px;width:28.2px;height:23.199999999999932px;background-image:radial-gradient(#bcd0ee 0.5px,transparent 0.6px);background-size:6px 6px;opacity:0.6"></div>
<svg style="position:absolute;left:19.2px;top:596.8px" width="11" height="11"><path d="M10 1 L10 10 L1 10 Z" fill="#dbe7f6"/></svg>
<div style="position:absolute;left:345.5px;top:585.6px;width:2.2px;height:226.4px;background:#bcdcea;"></div>
<div style="position:absolute;left:347.5px;top:585.6px;width:13.2px;height:226.39999999999998px;background:#7597c1;border-left:1px solid #a9c6e0;"></div>
<div style="position:absolute;left:347.5px;top:586.1px;width:13.2px;height:5px;background:linear-gradient(90deg,#eef3f9,#c7d5e6);border:1px solid #6d8bb4;"></div>
<div style="position:absolute;left:350.5px;top:588.1px;width:7.199999999999999px;height:1px;background:#6d8bb4;"></div>
<div style="position:absolute;left:347.5px;top:591.2px;width:13.2px;height:13px;background:linear-gradient(90deg,#f3f6fa 0%,#dbe4ef 55%,#b9c9dc 100%);border:1px solid #5b79a3;"></div>
<svg style="position:absolute;left:347.5px;top:591.2px" width="13.2" height="13"><path d="M2.8 8.3 L6.6 4.3 L10.399999999999999 8.3 Z" fill="#46566d"/></svg>
<div style="position:absolute;left:347.5px;top:604.8px;width:13.2px;height:16.800000000000068px;background:linear-gradient(90deg,#f1f5fa 0%,#dde6f1 50%,#b9c8dc 100%);border:1px solid #5b79a3;"></div>
<div style="position:absolute;left:351.0px;top:610.5px;width:6.199999999999999px;height:1px;background:#4a5c75;"></div>
<div style="position:absolute;left:351.0px;top:612.7px;width:6.199999999999999px;height:1px;background:#4a5c75;"></div>
<div style="position:absolute;left:351.0px;top:614.9000000000001px;width:6.199999999999999px;height:1px;background:#4a5c75;"></div>
<div style="position:absolute;left:347.5px;top:799px;width:13.2px;height:13px;background:linear-gradient(90deg,#f3f6fa 0%,#dbe4ef 55%,#b9c9dc 100%);border:1px solid #5b79a3;"></div>
<svg style="position:absolute;left:347.5px;top:799px" width="13.2" height="13"><path d="M2.8 4.7 L6.6 8.7 L10.399999999999999 4.7 Z" fill="#46566d"/></svg>
<div style="position:absolute;left:360.5px;top:584.6px;width:1px;height:228px;background:#a0a0a0;"></div>
<div style="position:absolute;left:366.3px;top:171.2px;width:342.5px;height:640.8px;background:#7a7a7a;"></div>
<div style="position:absolute;left:368.3px;top:200.2px;width:327.09999999999997px;height:599.0px;background:#fff;overflow:hidden;"></div>
<div style="position:absolute;left:368.3px;top:200.2px;width:27.69999999999999px;height:599.0px;background:#e4ebf7;border-right:1px solid #9fb7d6;"></div>
<div style="position:absolute;left:395.5px;top:200.2px;width:75.5px;height:599.0px;background:#bdfcfc;"></div>
<div style="position:absolute;left:395.5px;top:224.89000000000001px;width:299.9px;height:1px;background:#dcdcdc;"></div>
<div style="position:absolute;left:368.3px;top:224.89000000000001px;width:27.19999999999999px;height:1px;background:#a3bad8;"></div>
<div style="position:absolute;left:182.5px;width:400px;text-align:center;top:208.45px;line-height:11.17px;font-size:10px;font-weight:bold;color:#111;white-space:pre;">1</div>
<div style="position:absolute;left:233.25px;width:400px;text-align:center;top:207.34px;line-height:12.287px;font-size:11px;font-weight:normal;color:#1a1a1a;white-space:pre;">1101</div>
<div style="position:absolute;left:312.15px;width:400px;text-align:center;top:207.34px;line-height:12.287px;font-size:11px;font-weight:normal;color:#1a1a1a;white-space:pre;">7.52</div>
<div style="position:absolute;left:394.2px;width:400px;text-align:center;top:207.34px;line-height:12.287px;font-size:11px;font-weight:normal;color:#1a1a1a;white-space:pre;">2정</div>
<div style="position:absolute;left:395.5px;top:249.48000000000002px;width:299.9px;height:1px;background:#dcdcdc;"></div>
<div style="position:absolute;left:368.3px;top:249.48000000000002px;width:27.19999999999999px;height:1px;background:#a3bad8;"></div>
<div style="position:absolute;left:182.5px;width:400px;text-align:center;top:233.04px;line-height:11.17px;font-size:10px;font-weight:bold;color:#111;white-space:pre;">2</div>
<div style="position:absolute;left:233.25px;width:400px;text-align:center;top:231.94px;line-height:12.287px;font-size:11px;font-weight:normal;color:#1a1a1a;white-space:pre;">1102</div>
<div style="position:absolute;left:312.15px;width:400px;text-align:center;top:231.94px;line-height:12.287px;font-size:11px;font-weight:normal;color:#1a1a1a;white-space:pre;">8.31</div>
<div style="position:absolute;left:394.2px;width:400px;text-align:center;top:231.94px;line-height:12.287px;font-size:11px;font-weight:normal;color:#1a1a1a;white-space:pre;">2정</div>
<div style="position:absolute;left:395.5px;top:274.07px;width:299.9px;height:1px;background:#dcdcdc;"></div>
<div style="position:absolute;left:368.3px;top:274.07px;width:27.19999999999999px;height:1px;background:#a3bad8;"></div>
<div style="position:absolute;left:182.5px;width:400px;text-align:center;top:257.63px;line-height:11.17px;font-size:10px;font-weight:bold;color:#111;white-space:pre;">3</div>
<div style="position:absolute;left:233.25px;width:400px;text-align:center;top:256.53px;line-height:12.287px;font-size:11px;font-weight:normal;color:#1a1a1a;white-space:pre;">1103</div>
<div style="position:absolute;left:312.15px;width:400px;text-align:center;top:256.53px;line-height:12.287px;font-size:11px;font-weight:normal;color:#1a1a1a;white-space:pre;">8.36</div>
<div style="position:absolute;left:394.2px;width:400px;text-align:center;top:256.53px;line-height:12.287px;font-size:11px;font-weight:normal;color:#1a1a1a;white-space:pre;">2정</div>
<div style="position:absolute;left:395.5px;top:298.65999999999997px;width:299.9px;height:1px;background:#dcdcdc;"></div>
<div style="position:absolute;left:368.3px;top:298.65999999999997px;width:27.19999999999999px;height:1px;background:#a3bad8;"></div>
<div style="position:absolute;left:182.5px;width:400px;text-align:center;top:282.22px;line-height:11.17px;font-size:10px;font-weight:bold;color:#111;white-space:pre;">4</div>
<div style="position:absolute;left:233.25px;width:400px;text-align:center;top:281.12px;line-height:12.287px;font-size:11px;font-weight:normal;color:#1a1a1a;white-space:pre;">1104</div>
<div style="position:absolute;left:312.15px;width:400px;text-align:center;top:281.12px;line-height:12.287px;font-size:11px;font-weight:normal;color:#1a1a1a;white-space:pre;">8.77</div>
<div style="position:absolute;left:394.2px;width:400px;text-align:center;top:281.12px;line-height:12.287px;font-size:11px;font-weight:normal;color:#1a1a1a;white-space:pre;">2정</div>
<div style="position:absolute;left:395.5px;top:299.65999999999997px;width:299.9px;height:24.589999999999975px;background:#9ccbf0;"></div>
<div style="position:absolute;left:368.3px;top:299.65999999999997px;width:27.69999999999999px;height:24.589999999999975px;background:#8abdeb;border-right:1px solid #5f95c9;"></div>
<div style="position:absolute;left:395.5px;top:299.65999999999997px;width:75.5px;height:24.589999999999975px;background:#6ec6ee;"></div>
<div style="position:absolute;left:395.5px;top:323.24999999999994px;width:299.9px;height:1px;background:#7fb2e0;"></div>
<div style="position:absolute;left:368.3px;top:323.24999999999994px;width:27.19999999999999px;height:1px;background:#a3bad8;"></div>
<div style="position:absolute;left:182.5px;width:400px;text-align:center;top:306.81px;line-height:11.17px;font-size:10px;font-weight:bold;color:#111;white-space:pre;">5</div>
<div style="position:absolute;left:233.25px;width:400px;text-align:center;top:305.7px;line-height:12.287px;font-size:11px;font-weight:normal;color:#1a1a1a;white-space:pre;">1105</div>
<div style="position:absolute;left:312.15px;width:400px;text-align:center;top:305.7px;line-height:12.287px;font-size:11px;font-weight:normal;color:#1a1a1a;white-space:pre;">8.04</div>
<div style="position:absolute;left:394.2px;width:400px;text-align:center;top:305.7px;line-height:12.287px;font-size:11px;font-weight:normal;color:#1a1a1a;white-space:pre;">2정</div>
<div style="position:absolute;left:395.5px;top:347.8399999999999px;width:299.9px;height:1px;background:#dcdcdc;"></div>
<div style="position:absolute;left:368.3px;top:347.8399999999999px;width:27.19999999999999px;height:1px;background:#a3bad8;"></div>
<div style="position:absolute;left:182.5px;width:400px;text-align:center;top:331.4px;line-height:11.17px;font-size:10px;font-weight:bold;color:#111;white-space:pre;">6</div>
<div style="position:absolute;left:233.25px;width:400px;text-align:center;top:330.29px;line-height:12.287px;font-size:11px;font-weight:normal;color:#1a1a1a;white-space:pre;">1106</div>
<div style="position:absolute;left:312.15px;width:400px;text-align:center;top:330.29px;line-height:12.287px;font-size:11px;font-weight:normal;color:#1a1a1a;white-space:pre;">8.29</div>
<div style="position:absolute;left:394.2px;width:400px;text-align:center;top:330.29px;line-height:12.287px;font-size:11px;font-weight:normal;color:#1a1a1a;white-space:pre;">2정</div>
<div style="position:absolute;left:395.5px;top:372.4299999999999px;width:299.9px;height:1px;background:#dcdcdc;"></div>
<div style="position:absolute;left:368.3px;top:372.4299999999999px;width:27.19999999999999px;height:1px;background:#a3bad8;"></div>
<div style="position:absolute;left:182.5px;width:400px;text-align:center;top:355.99px;line-height:11.17px;font-size:10px;font-weight:bold;color:#111;white-space:pre;">7</div>
<div style="position:absolute;left:233.25px;width:400px;text-align:center;top:354.88px;line-height:12.287px;font-size:11px;font-weight:normal;color:#1a1a1a;white-space:pre;">1201</div>
<div style="position:absolute;left:312.15px;width:400px;text-align:center;top:354.88px;line-height:12.287px;font-size:11px;font-weight:normal;color:#1a1a1a;white-space:pre;">7.57</div>
<div style="position:absolute;left:394.2px;width:400px;text-align:center;top:354.88px;line-height:12.287px;font-size:11px;font-weight:normal;color:#1a1a1a;white-space:pre;">1정</div>
<div style="position:absolute;left:395.5px;top:397.01999999999987px;width:299.9px;height:1px;background:#dcdcdc;"></div>
<div style="position:absolute;left:368.3px;top:397.01999999999987px;width:27.19999999999999px;height:1px;background:#a3bad8;"></div>
<div style="position:absolute;left:182.5px;width:400px;text-align:center;top:380.58px;line-height:11.17px;font-size:10px;font-weight:bold;color:#111;white-space:pre;">8</div>
<div style="position:absolute;left:233.25px;width:400px;text-align:center;top:379.47px;line-height:12.287px;font-size:11px;font-weight:normal;color:#1a1a1a;white-space:pre;">1202</div>
<div style="position:absolute;left:312.15px;width:400px;text-align:center;top:379.47px;line-height:12.287px;font-size:11px;font-weight:normal;color:#1a1a1a;white-space:pre;">8.16</div>
<div style="position:absolute;left:394.2px;width:400px;text-align:center;top:379.47px;line-height:12.287px;font-size:11px;font-weight:normal;color:#1a1a1a;white-space:pre;">1정</div>
<div style="position:absolute;left:395.5px;top:421.60999999999984px;width:299.9px;height:1px;background:#dcdcdc;"></div>
<div style="position:absolute;left:368.3px;top:421.60999999999984px;width:27.19999999999999px;height:1px;background:#a3bad8;"></div>
<div style="position:absolute;left:182.5px;width:400px;text-align:center;top:405.17px;line-height:11.17px;font-size:10px;font-weight:bold;color:#111;white-space:pre;">9</div>
<div style="position:absolute;left:233.25px;width:400px;text-align:center;top:404.06px;line-height:12.287px;font-size:11px;font-weight:normal;color:#1a1a1a;white-space:pre;">1203</div>
<div style="position:absolute;left:312.15px;width:400px;text-align:center;top:404.06px;line-height:12.287px;font-size:11px;font-weight:normal;color:#1a1a1a;white-space:pre;">8.57</div>
<div style="position:absolute;left:394.2px;width:400px;text-align:center;top:404.06px;line-height:12.287px;font-size:11px;font-weight:normal;color:#1a1a1a;white-space:pre;">1정</div>
<div style="position:absolute;left:395.5px;top:446.1999999999998px;width:299.9px;height:1px;background:#dcdcdc;"></div>
<div style="position:absolute;left:368.3px;top:446.1999999999998px;width:27.19999999999999px;height:1px;background:#a3bad8;"></div>
<div style="position:absolute;left:182.5px;width:400px;text-align:center;top:429.76px;line-height:11.17px;font-size:10px;font-weight:bold;color:#111;white-space:pre;">10</div>
<div style="position:absolute;left:233.25px;width:400px;text-align:center;top:428.65px;line-height:12.287px;font-size:11px;font-weight:normal;color:#1a1a1a;white-space:pre;">1204</div>
<div style="position:absolute;left:312.15px;width:400px;text-align:center;top:428.65px;line-height:12.287px;font-size:11px;font-weight:normal;color:#1a1a1a;white-space:pre;">8.73</div>
<div style="position:absolute;left:394.2px;width:400px;text-align:center;top:428.65px;line-height:12.287px;font-size:11px;font-weight:normal;color:#1a1a1a;white-space:pre;">1정</div>
<div style="position:absolute;left:395.5px;top:470.7899999999998px;width:299.9px;height:1px;background:#dcdcdc;"></div>
<div style="position:absolute;left:368.3px;top:470.7899999999998px;width:27.19999999999999px;height:1px;background:#a3bad8;"></div>
<div style="position:absolute;left:182.5px;width:400px;text-align:center;top:454.35px;line-height:11.17px;font-size:10px;font-weight:bold;color:#111;white-space:pre;">11</div>
<div style="position:absolute;left:233.25px;width:400px;text-align:center;top:453.24px;line-height:12.287px;font-size:11px;font-weight:normal;color:#1a1a1a;white-space:pre;">1301</div>
<div style="position:absolute;left:312.15px;width:400px;text-align:center;top:453.24px;line-height:12.287px;font-size:11px;font-weight:normal;color:#1a1a1a;white-space:pre;">7.71</div>
<div style="position:absolute;left:394.2px;width:400px;text-align:center;top:453.24px;line-height:12.287px;font-size:11px;font-weight:normal;color:#1a1a1a;white-space:pre;">1정</div>
<div style="position:absolute;left:395.5px;top:495.37999999999977px;width:299.9px;height:1px;background:#dcdcdc;"></div>
<div style="position:absolute;left:368.3px;top:495.37999999999977px;width:27.19999999999999px;height:1px;background:#a3bad8;"></div>
<div style="position:absolute;left:182.5px;width:400px;text-align:center;top:478.94px;line-height:11.17px;font-size:10px;font-weight:bold;color:#111;white-space:pre;">12</div>
<div style="position:absolute;left:233.25px;width:400px;text-align:center;top:477.83px;line-height:12.287px;font-size:11px;font-weight:normal;color:#1a1a1a;white-space:pre;">1302</div>
<div style="position:absolute;left:312.15px;width:400px;text-align:center;top:477.83px;line-height:12.287px;font-size:11px;font-weight:normal;color:#1a1a1a;white-space:pre;">8.24</div>
<div style="position:absolute;left:394.2px;width:400px;text-align:center;top:477.83px;line-height:12.287px;font-size:11px;font-weight:normal;color:#1a1a1a;white-space:pre;">1정</div>
<div style="position:absolute;left:395.5px;top:519.9699999999998px;width:299.9px;height:1px;background:#dcdcdc;"></div>
<div style="position:absolute;left:368.3px;top:519.9699999999998px;width:27.19999999999999px;height:1px;background:#a3bad8;"></div>
<div style="position:absolute;left:182.5px;width:400px;text-align:center;top:503.53px;line-height:11.17px;font-size:10px;font-weight:bold;color:#111;white-space:pre;">13</div>
<div style="position:absolute;left:233.25px;width:400px;text-align:center;top:502.42px;line-height:12.287px;font-size:11px;font-weight:normal;color:#1a1a1a;white-space:pre;">1303</div>
<div style="position:absolute;left:312.15px;width:400px;text-align:center;top:502.42px;line-height:12.287px;font-size:11px;font-weight:normal;color:#1a1a1a;white-space:pre;">8.52</div>
<div style="position:absolute;left:394.2px;width:400px;text-align:center;top:502.42px;line-height:12.287px;font-size:11px;font-weight:normal;color:#1a1a1a;white-space:pre;">1정</div>
<div style="position:absolute;left:395.5px;top:544.5599999999998px;width:299.9px;height:1px;background:#dcdcdc;"></div>
<div style="position:absolute;left:368.3px;top:544.5599999999998px;width:27.19999999999999px;height:1px;background:#a3bad8;"></div>
<div style="position:absolute;left:182.5px;width:400px;text-align:center;top:528.12px;line-height:11.17px;font-size:10px;font-weight:bold;color:#111;white-space:pre;">14</div>
<div style="position:absolute;left:233.25px;width:400px;text-align:center;top:527.01px;line-height:12.287px;font-size:11px;font-weight:normal;color:#1a1a1a;white-space:pre;">1304</div>
<div style="position:absolute;left:312.15px;width:400px;text-align:center;top:527.01px;line-height:12.287px;font-size:11px;font-weight:normal;color:#1a1a1a;white-space:pre;">8.85</div>
<div style="position:absolute;left:394.2px;width:400px;text-align:center;top:527.01px;line-height:12.287px;font-size:11px;font-weight:normal;color:#1a1a1a;white-space:pre;">1정</div>
<div style="position:absolute;left:395.5px;top:569.1499999999999px;width:299.9px;height:1px;background:#dcdcdc;"></div>
<div style="position:absolute;left:368.3px;top:569.1499999999999px;width:27.19999999999999px;height:1px;background:#a3bad8;"></div>
<div style="position:absolute;left:182.5px;width:400px;text-align:center;top:552.71px;line-height:11.17px;font-size:10px;font-weight:bold;color:#111;white-space:pre;">15</div>
<div style="position:absolute;left:233.25px;width:400px;text-align:center;top:551.6px;line-height:12.287px;font-size:11px;font-weight:normal;color:#1a1a1a;white-space:pre;">1401</div>
<div style="position:absolute;left:312.15px;width:400px;text-align:center;top:551.6px;line-height:12.287px;font-size:11px;font-weight:normal;color:#1a1a1a;white-space:pre;">8.23</div>
<div style="position:absolute;left:394.2px;width:400px;text-align:center;top:551.6px;line-height:12.287px;font-size:11px;font-weight:normal;color:#1a1a1a;white-space:pre;">2정</div>
<div style="position:absolute;left:395.5px;top:593.7399999999999px;width:299.9px;height:1px;background:#dcdcdc;"></div>
<div style="position:absolute;left:368.3px;top:593.7399999999999px;width:27.19999999999999px;height:1px;background:#a3bad8;"></div>
<div style="position:absolute;left:182.5px;width:400px;text-align:center;top:577.3px;line-height:11.17px;font-size:10px;font-weight:bold;color:#111;white-space:pre;">16</div>
<div style="position:absolute;left:233.25px;width:400px;text-align:center;top:576.19px;line-height:12.287px;font-size:11px;font-weight:normal;color:#1a1a1a;white-space:pre;">1402</div>
<div style="position:absolute;left:312.15px;width:400px;text-align:center;top:576.19px;line-height:12.287px;font-size:11px;font-weight:normal;color:#1a1a1a;white-space:pre;">8.85</div>
<div style="position:absolute;left:394.2px;width:400px;text-align:center;top:576.19px;line-height:12.287px;font-size:11px;font-weight:normal;color:#1a1a1a;white-space:pre;">2정</div>
<div style="position:absolute;left:395.5px;top:618.3299999999999px;width:299.9px;height:1px;background:#dcdcdc;"></div>
<div style="position:absolute;left:368.3px;top:618.3299999999999px;width:27.19999999999999px;height:1px;background:#a3bad8;"></div>
<div style="position:absolute;left:182.5px;width:400px;text-align:center;top:601.89px;line-height:11.17px;font-size:10px;font-weight:bold;color:#111;white-space:pre;">17</div>
<div style="position:absolute;left:233.25px;width:400px;text-align:center;top:600.78px;line-height:12.287px;font-size:11px;font-weight:normal;color:#1a1a1a;white-space:pre;">1403</div>
<div style="position:absolute;left:312.15px;width:400px;text-align:center;top:600.78px;line-height:12.287px;font-size:11px;font-weight:normal;color:#1a1a1a;white-space:pre;">8.64</div>
<div style="position:absolute;left:394.2px;width:400px;text-align:center;top:600.78px;line-height:12.287px;font-size:11px;font-weight:normal;color:#1a1a1a;white-space:pre;">2정</div>
<div style="position:absolute;left:395.5px;top:642.92px;width:299.9px;height:1px;background:#dcdcdc;"></div>
<div style="position:absolute;left:368.3px;top:642.92px;width:27.19999999999999px;height:1px;background:#a3bad8;"></div>
<div style="position:absolute;left:182.5px;width:400px;text-align:center;top:626.48px;line-height:11.17px;font-size:10px;font-weight:bold;color:#111;white-space:pre;">18</div>
<div style="position:absolute;left:233.25px;width:400px;text-align:center;top:625.37px;line-height:12.287px;font-size:11px;font-weight:normal;color:#1a1a1a;white-space:pre;">1404</div>
<div style="position:absolute;left:312.15px;width:400px;text-align:center;top:625.37px;line-height:12.287px;font-size:11px;font-weight:normal;color:#1a1a1a;white-space:pre;">8.64</div>
<div style="position:absolute;left:394.2px;width:400px;text-align:center;top:625.37px;line-height:12.287px;font-size:11px;font-weight:normal;color:#1a1a1a;white-space:pre;">2정</div>
<div style="position:absolute;left:395.5px;top:667.51px;width:299.9px;height:1px;background:#dcdcdc;"></div>
<div style="position:absolute;left:368.3px;top:667.51px;width:27.19999999999999px;height:1px;background:#a3bad8;"></div>
<div style="position:absolute;left:182.5px;width:400px;text-align:center;top:651.07px;line-height:11.17px;font-size:10px;font-weight:bold;color:#111;white-space:pre;">19</div>
<div style="position:absolute;left:233.25px;width:400px;text-align:center;top:649.96px;line-height:12.287px;font-size:11px;font-weight:normal;color:#1a1a1a;white-space:pre;">1405</div>
<div style="position:absolute;left:312.15px;width:400px;text-align:center;top:649.96px;line-height:12.287px;font-size:11px;font-weight:normal;color:#1a1a1a;white-space:pre;">8.07</div>
<div style="position:absolute;left:394.2px;width:400px;text-align:center;top:649.96px;line-height:12.287px;font-size:11px;font-weight:normal;color:#1a1a1a;white-space:pre;">2정</div>
<div style="position:absolute;left:395.5px;top:692.1px;width:299.9px;height:1px;background:#dcdcdc;"></div>
<div style="position:absolute;left:368.3px;top:692.1px;width:27.19999999999999px;height:1px;background:#a3bad8;"></div>
<div style="position:absolute;left:182.5px;width:400px;text-align:center;top:675.66px;line-height:11.17px;font-size:10px;font-weight:bold;color:#111;white-space:pre;">20</div>
<div style="position:absolute;left:233.25px;width:400px;text-align:center;top:674.55px;line-height:12.287px;font-size:11px;font-weight:normal;color:#1a1a1a;white-space:pre;">1406</div>
<div style="position:absolute;left:312.15px;width:400px;text-align:center;top:674.55px;line-height:12.287px;font-size:11px;font-weight:normal;color:#1a1a1a;white-space:pre;">8.57</div>
<div style="position:absolute;left:394.2px;width:400px;text-align:center;top:674.55px;line-height:12.287px;font-size:11px;font-weight:normal;color:#1a1a1a;white-space:pre;">2정</div>
<div style="position:absolute;left:395.5px;top:716.69px;width:299.9px;height:1px;background:#dcdcdc;"></div>
<div style="position:absolute;left:368.3px;top:716.69px;width:27.19999999999999px;height:1px;background:#a3bad8;"></div>
<div style="position:absolute;left:182.5px;width:400px;text-align:center;top:700.25px;line-height:11.17px;font-size:10px;font-weight:bold;color:#111;white-space:pre;">21</div>
<div style="position:absolute;left:233.25px;width:400px;text-align:center;top:699.14px;line-height:12.287px;font-size:11px;font-weight:normal;color:#1a1a1a;white-space:pre;">2101</div>
<div style="position:absolute;left:312.15px;width:400px;text-align:center;top:699.14px;line-height:12.287px;font-size:11px;font-weight:normal;color:#1a1a1a;white-space:pre;">5.73</div>
<div style="position:absolute;left:394.2px;width:400px;text-align:center;top:699.14px;line-height:12.287px;font-size:11px;font-weight:normal;color:#1a1a1a;white-space:pre;">2정</div>
<div style="position:absolute;left:395.5px;top:741.2800000000001px;width:299.9px;height:1px;background:#dcdcdc;"></div>
<div style="position:absolute;left:368.3px;top:741.2800000000001px;width:27.19999999999999px;height:1px;background:#a3bad8;"></div>
<div style="position:absolute;left:182.5px;width:400px;text-align:center;top:724.84px;line-height:11.17px;font-size:10px;font-weight:bold;color:#111;white-space:pre;">22</div>
<div style="position:absolute;left:233.25px;width:400px;text-align:center;top:723.74px;line-height:12.287px;font-size:11px;font-weight:normal;color:#1a1a1a;white-space:pre;">2102</div>
<div style="position:absolute;left:312.15px;width:400px;text-align:center;top:723.74px;line-height:12.287px;font-size:11px;font-weight:normal;color:#1a1a1a;white-space:pre;">6.75</div>
<div style="position:absolute;left:394.2px;width:400px;text-align:center;top:723.74px;line-height:12.287px;font-size:11px;font-weight:normal;color:#1a1a1a;white-space:pre;">2정</div>
<div style="position:absolute;left:395.5px;top:765.8700000000001px;width:299.9px;height:1px;background:#dcdcdc;"></div>
<div style="position:absolute;left:368.3px;top:765.8700000000001px;width:27.19999999999999px;height:1px;background:#a3bad8;"></div>
<div style="position:absolute;left:182.5px;width:400px;text-align:center;top:749.43px;line-height:11.17px;font-size:10px;font-weight:bold;color:#111;white-space:pre;">23</div>
<div style="position:absolute;left:233.25px;width:400px;text-align:center;top:748.33px;line-height:12.287px;font-size:11px;font-weight:normal;color:#1a1a1a;white-space:pre;">2103</div>
<div style="position:absolute;left:312.15px;width:400px;text-align:center;top:748.33px;line-height:12.287px;font-size:11px;font-weight:normal;color:#1a1a1a;white-space:pre;">7.13</div>
<div style="position:absolute;left:394.2px;width:400px;text-align:center;top:748.33px;line-height:12.287px;font-size:11px;font-weight:normal;color:#1a1a1a;white-space:pre;">2정</div>
<div style="position:absolute;left:395.5px;top:790.4600000000002px;width:299.9px;height:1px;background:#dcdcdc;"></div>
<div style="position:absolute;left:368.3px;top:790.4600000000002px;width:27.19999999999999px;height:1px;background:#a3bad8;"></div>
<div style="position:absolute;left:182.5px;width:400px;text-align:center;top:774.02px;line-height:11.17px;font-size:10px;font-weight:bold;color:#111;white-space:pre;">24</div>
<div style="position:absolute;left:233.25px;width:400px;text-align:center;top:772.92px;line-height:12.287px;font-size:11px;font-weight:normal;color:#1a1a1a;white-space:pre;">2104</div>
<div style="position:absolute;left:312.15px;width:400px;text-align:center;top:772.92px;line-height:12.287px;font-size:11px;font-weight:normal;color:#1a1a1a;white-space:pre;">7.61</div>
<div style="position:absolute;left:394.2px;width:400px;text-align:center;top:772.92px;line-height:12.287px;font-size:11px;font-weight:normal;color:#1a1a1a;white-space:pre;">2정</div>
<div style="position:absolute;left:182.5px;width:400px;text-align:center;top:798.61px;line-height:11.17px;font-size:10px;font-weight:bold;color:#111;white-space:pre;">25</div>
<div style="position:absolute;left:470.5px;top:200.2px;width:1px;height:599.0px;background:#d9d9d9;"></div>
<div style="position:absolute;left:552.8px;top:200.2px;width:1px;height:599.0px;background:#d9d9d9;"></div>
<div style="position:absolute;left:634.6px;top:200.2px;width:1px;height:599.0px;background:#d9d9d9;"></div>
<div style="position:absolute;left:395.5px;top:172.2px;width:76.0px;height:28.0px;background:linear-gradient(180deg,#fef8ee 0%,#fae3bb 45%,#f6cb7f 100%);border-bottom:1.5px solid #f2a03c;border-right:1px solid #f4a548;"></div>
<div style="position:absolute;left:233.25px;width:400px;text-align:center;top:181.24px;line-height:12.287px;font-size:11px;font-weight:bold;color:#1b1b1b;white-space:pre;">Animal No.</div>
<div style="position:absolute;left:471px;top:172.2px;width:82.79999999999995px;height:28.0px;background:linear-gradient(180deg,#fef8ee 0%,#fae3bb 45%,#f6cb7f 100%);border-bottom:1.5px solid #f2a03c;border-right:1px solid #f4a548;"></div>
<div style="position:absolute;left:312.15px;width:400px;text-align:center;top:181.24px;line-height:12.287px;font-size:11px;font-weight:bold;color:#1b1b1b;white-space:pre;">Body Weight</div>
<div style="position:absolute;left:553.3px;top:172.2px;width:82.30000000000007px;height:28.0px;background:linear-gradient(180deg,#fef8ee 0%,#fae3bb 45%,#f6cb7f 100%);border-bottom:1.5px solid #f2a03c;border-right:1px solid #f4a548;"></div>
<div style="position:absolute;left:394.2px;width:400px;text-align:center;top:181.24px;line-height:12.287px;font-size:11px;font-weight:bold;color:#1b1b1b;white-space:pre;">Dosage</div>
<div style="position:absolute;left:635.1px;top:172.2px;width:60.799999999999955px;height:28.0px;background:linear-gradient(180deg,#fef8ee 0%,#fae3bb 45%,#f6cb7f 100%);border-bottom:1.5px solid #f2a03c;border-right:1px solid #f4a548;"></div>
<div style="position:absolute;left:465.25px;width:400px;text-align:center;top:181.24px;line-height:12.287px;font-size:11px;font-weight:bold;color:#1b1b1b;white-space:pre;"></div>
<div style="position:absolute;left:368.3px;top:172.2px;width:27.19999999999999px;height:28.0px;background:#a9c5eb;"></div>
<div style="position:absolute;left:368.3px;top:172.2px;width:27.19999999999999px;height:28.0px;background-image:radial-gradient(#bcd0ee 0.5px,transparent 0.6px);background-size:6px 6px;opacity:0.6"></div>
<svg style="position:absolute;left:383.5px;top:188.2px" width="11" height="11"><path d="M10 1 L10 10 L1 10 Z" fill="#dbe7f6"/></svg>
<div style="position:absolute;left:635.1px;top:172.2px;width:60.3px;height:28px;overflow:hidden;"><div style="position:absolute;left:7.7px;top:8.9px;line-height:12.3px;font-size:11px;font-weight:bold;color:#1b1b1b;white-space:pre">Dose Volume</div></div>
<div style="position:absolute;left:695.2px;top:172.2px;width:13.7px;height:613.0999999999999px;background:#7597c1;border-left:1px solid #a9c6e0;"></div>
<div style="position:absolute;left:695.2px;top:172.7px;width:13.7px;height:5px;background:linear-gradient(90deg,#eef3f9,#c7d5e6);border:1px solid #6d8bb4;"></div>
<div style="position:absolute;left:698.2px;top:174.7px;width:7.699999999999999px;height:1px;background:#6d8bb4;"></div>
<div style="position:absolute;left:695.2px;top:177.79999999999998px;width:13.7px;height:13px;background:linear-gradient(90deg,#f3f6fa 0%,#dbe4ef 55%,#b9c9dc 100%);border:1px solid #5b79a3;"></div>
<svg style="position:absolute;left:695.2px;top:177.79999999999998px" width="13.7" height="13"><path d="M3.05 8.3 L6.85 4.3 L10.649999999999999 8.3 Z" fill="#46566d"/></svg>
<div style="position:absolute;left:695.2px;top:190.5px;width:13.7px;height:355.5px;background:linear-gradient(90deg,#f1f5fa 0%,#dde6f1 50%,#b9c8dc 100%);border:1px solid #5b79a3;"></div>
<div style="position:absolute;left:698.7px;top:365.55px;width:6.699999999999999px;height:1px;background:#4a5c75;"></div>
<div style="position:absolute;left:698.7px;top:367.75px;width:6.699999999999999px;height:1px;background:#4a5c75;"></div>
<div style="position:absolute;left:698.7px;top:369.95px;width:6.699999999999999px;height:1px;background:#4a5c75;"></div>
<div style="position:absolute;left:695.2px;top:785.3px;width:13.7px;height:13.5px;background:linear-gradient(90deg,#f3f6fa 0%,#dbe4ef 55%,#b9c9dc 100%);border:1px solid #5b79a3;"></div>
<svg style="position:absolute;left:695.2px;top:785.3px" width="13.7" height="13.5"><path d="M3.05 4.95 L6.85 8.95 L10.649999999999999 4.95 Z" fill="#46566d"/></svg>
<div style="position:absolute;left:695.2px;top:798.8px;width:13.7px;height:13.2px;background:#a9c4e0;"></div>
<div style="position:absolute;left:368.3px;top:799.2px;width:327.1px;height:12.8px;background:#7597c1;border-top:1px solid #a9c6e0;"></div>
<div style="position:absolute;left:368.8px;top:800.6px;width:3.5px;height:10.5px;background:#eaf0f7;border:1px solid #6d8bb4;"></div>
<div style="position:absolute;left:372.5px;top:800px;width:14px;height:12px;background:linear-gradient(180deg,#f3f6fa 0%,#dbe4ef 55%,#b9c9dc 100%);border:1px solid #5b79a3;"></div>
<svg style="position:absolute;left:372.5px;top:800px" width="14" height="12"><path d="M9 2.5 L5 6 L9 9.5 Z" fill="#46566d"/></svg>
<div style="position:absolute;left:386.3px;top:800px;width:77px;height:12px;background:linear-gradient(180deg,#f1f5fa 0%,#dde6f1 50%,#b9c8dc 100%);border:1px solid #5b79a3;"></div>
<div style="position:absolute;left:422.5px;top:803px;width:1px;height:6px;background:#4a5c75;"></div>
<div style="position:absolute;left:424.5px;top:803px;width:1px;height:6px;background:#4a5c75;"></div>
<div style="position:absolute;left:426.5px;top:803px;width:1px;height:6px;background:#4a5c75;"></div>
<div style="position:absolute;left:681.5px;top:800px;width:13.5px;height:12px;background:linear-gradient(180deg,#f3f6fa 0%,#dbe4ef 55%,#b9c9dc 100%);border:1px solid #5b79a3;"></div>
<svg style="position:absolute;left:681.5px;top:800px" width="14" height="12"><path d="M5 2.5 L9 6 L5 9.5 Z" fill="#46566d"/></svg>
<div style="position:absolute;left:708.9px;top:171.2px;width:1px;height:641px;background:#f7f7f7;"></div>
<div style="position:absolute;left:714px;top:171.2px;width:826px;height:640.8px;background:#f0f0f0;border-top:1px solid #7a7a7a;border-left:1.5px solid #7a7a7a;"></div>
<div style="position:absolute;left:438.2px;width:400px;text-align:right;top:202.24px;line-height:12.287px;font-size:11px;font-weight:bold;color:#111;white-space:pre;">Print File Name</div>
<div style="position:absolute;left:845.2px;top:198.2px;width:230.2px;height:19.4px;background:#e3e3e3;border:1px solid #c4c4c4;"></div>
<svg style="position:absolute;left:1062px;top:203px" width="10" height="10"><path d="M1.5 3.5 L5 7 L8.5 3.5" fill="none" stroke="#555" stroke-width="1"/></svg>
<div style="position:absolute;left:438px;width:400px;text-align:right;top:253.65px;line-height:12.287px;font-size:11px;font-weight:bold;color:#111;white-space:pre;">Study Date/Time</div>
<div style="position:absolute;left:845.2px;top:249.1px;width:120.4px;height:21px;background:#f0f0f0;border:1px solid #7a7a7a;"></div>
<div style="position:absolute;left:705.4px;width:400px;text-align:center;top:253.24px;line-height:12.287px;font-size:11px;font-weight:bold;color:#111;white-space:pre;letter-spacing:0.4px;text-indent:0.4px;">2021-07-07</div>
<div style="position:absolute;left:970.2px;top:249.1px;width:105.2px;height:21px;background:#f0f0f0;border:1px solid #7a7a7a;"></div>
<div style="position:absolute;left:822.8px;width:400px;text-align:center;top:253.24px;line-height:12.287px;font-size:11px;font-weight:bold;color:#111;white-space:pre;letter-spacing:0.4px;text-indent:0.4px;">11:00:27</div>
<div style="position:absolute;left:438px;width:400px;text-align:right;top:286.44px;line-height:12.287px;font-size:11px;font-weight:bold;color:#111;white-space:pre;">Animal No.</div>
<div style="position:absolute;left:845.2px;top:282.3px;width:120.4px;height:26.4px;background:#f0f0f0;border:1px solid #7a7a7a;"></div>
<div style="position:absolute;left:705.4px;width:400px;text-align:center;top:286.72px;line-height:17.872px;font-size:16px;font-weight:normal;color:#111;white-space:pre;letter-spacing:-0.4px;">1105</div>
<div style="position:absolute;left:970.2px;top:282.3px;width:105.2px;height:26.4px;background:#f0f0f0;border:1px solid #7a7a7a;"></div>
<div style="position:absolute;left:822.8px;width:400px;text-align:center;top:286.72px;line-height:17.872px;font-size:16px;font-weight:normal;color:#111;white-space:pre;letter-spacing:-0.4px;">1019</div>
<div style="position:absolute;left:438.4px;width:400px;text-align:right;top:321.05px;line-height:12.287px;font-size:11px;font-weight:bold;color:#111;white-space:pre;">Dosage</div>
<div style="position:absolute;left:845px;top:317.2px;width:230.3px;height:58.4px;background:#ffffff;border:1px solid #7a7a7a;"></div>
<div style="position:absolute;left:930.2px;top:326.69px;line-height:46.914px;font-size:42px;font-weight:normal;color:#111;white-space:pre;transform:scaleX(0.9);transform-origin:0 0;">2</div>
<div style="position:absolute;left:951.3px;top:324.65px;line-height:45.239px;font-size:40.5px;font-weight:normal;color:#111;white-space:pre;">정</div>
<div style="position:absolute;left:1081.3px;top:324.4px;width:10.6px;height:10.6px;background:#fff;border:1px solid #333;"></div>
<div style="position:absolute;left:1096.9px;top:323.05px;line-height:12.287px;font-size:11px;font-weight:bold;color:#ee1111;white-space:pre;letter-spacing:-0.2px;">Fixed dosage</div>
<div style="position:absolute;left:1081.3px;top:357.4px;width:10.6px;height:10.6px;background:#fff;border:1px solid #333;"></div>
<div style="position:absolute;left:1097.4px;top:356.85px;line-height:12.287px;font-size:11px;font-weight:bold;color:#111;white-space:pre;">1/2</div>
<svg style="position:absolute;left:844.8px;top:402.8px" width="12" height="12"><circle cx="5.6" cy="5.6" r="4.9" fill="#fff" stroke="#333" stroke-width="1"/></svg>
<div style="position:absolute;left:860.8px;top:402.35px;line-height:12.287px;font-size:11px;font-weight:bold;color:#111;white-space:pre;letter-spacing:-0.1px;">0 decimal place</div>
<svg style="position:absolute;left:986.8px;top:402.8px" width="12" height="12"><circle cx="5.6" cy="5.6" r="4.9" fill="#fff" stroke="#333" stroke-width="1"/><circle cx="5.6" cy="5.6" r="2.6" fill="#222"/></svg>
<div style="position:absolute;left:1002.6px;top:402.35px;line-height:12.287px;font-size:11px;font-weight:bold;color:#111;white-space:pre;letter-spacing:-0.1px;">1 decimal place</div>
<svg style="position:absolute;left:1127.8px;top:402.8px" width="12" height="12"><circle cx="5.6" cy="5.6" r="4.9" fill="#fff" stroke="#333" stroke-width="1"/></svg>
<div style="position:absolute;left:1143.6px;top:402.35px;line-height:12.287px;font-size:11px;font-weight:bold;color:#111;white-space:pre;letter-spacing:-0.1px;">2 decimal place</div>
<div style="position:absolute;left:438.4px;width:400px;text-align:right;top:430.85px;line-height:12.287px;font-size:11px;font-weight:bold;color:#111;white-space:pre;">Unit</div>
<div style="position:absolute;left:845px;top:427.3px;width:120.2px;height:20px;background:#f0f0f0;border:1px solid #7a7a7a;"></div>
<div style="position:absolute;left:705.0px;width:400px;text-align:center;top:430.85px;line-height:12.287px;font-size:11px;font-weight:bold;color:#111;white-space:pre;">mL/kg</div>
<div style="position:absolute;left:665.7px;width:400px;text-align:right;top:430.85px;line-height:12.287px;font-size:11px;font-weight:bold;color:#111;white-space:pre;">Group ID</div>
<div style="position:absolute;left:1081.3px;top:427.3px;width:74.3px;height:20px;background:#f0f0f0;border:1px solid #7a7a7a;"></div>
<div style="position:absolute;left:918.4px;width:400px;text-align:center;top:430.85px;line-height:12.287px;font-size:11px;font-weight:bold;color:#111;white-space:pre;">G1</div>
<div style="position:absolute;left:438.4px;width:400px;text-align:right;top:459.44px;line-height:12.287px;font-size:11px;font-weight:bold;color:#111;white-space:pre;">First Dose Date</div>
<div style="position:absolute;left:845px;top:455px;width:120.2px;height:20.3px;background:#f0f0f0;border:1px solid #7a7a7a;"></div>
<div style="position:absolute;left:705.0px;width:400px;text-align:center;top:459.44px;line-height:12.287px;font-size:11px;font-weight:bold;color:#111;white-space:pre;letter-spacing:0.4px;text-indent:0.4px;">2021-07-06</div>
<div style="position:absolute;left:624.2px;width:400px;text-align:right;top:459.44px;line-height:12.287px;font-size:11px;font-weight:bold;color:#111;white-space:pre;">Days</div>
<div style="position:absolute;left:1035.3px;top:455px;width:120.3px;height:20.3px;background:#f0f0f0;border:1px solid #7a7a7a;"></div>
<div style="position:absolute;left:895.4px;width:400px;text-align:center;top:459.44px;line-height:12.287px;font-size:11px;font-weight:bold;color:#111;white-space:pre;">2</div>
<div style="position:absolute;left:1235.5px;top:462.7px;width:72.9px;height:23.7px;background:#f0f0f0;border:1px solid #8a8a8a;"></div>
<div style="position:absolute;left:1071.8px;width:400px;text-align:center;top:468.44px;line-height:14.521px;font-size:13px;font-weight:bold;color:#111;white-space:pre;">kg</div>
<div style="position:absolute;left:438px;width:400px;text-align:right;top:515.25px;line-height:12.287px;font-size:11px;font-weight:bold;color:#111;white-space:pre;">Syringe</div>
<div style="position:absolute;left:845px;top:510.4px;width:120.2px;height:23.1px;background:#ffffff;border:1px solid #7a7a7a;"></div>
<div style="position:absolute;left:705.0px;width:400px;text-align:center;top:514.54px;line-height:12.287px;font-size:11px;font-weight:normal;color:#333;white-space:pre;">-</div>
<div style="position:absolute;left:970.9px;top:520.44px;line-height:12.287px;font-size:11px;font-weight:bold;color:#111;white-space:pre;">mL</div>
<div style="position:absolute;left:1035.3px;top:510.2px;width:120.4px;height:23.5px;background:#ffffff;border:1px solid #7a7a7a;"></div>
<div style="position:absolute;left:895.4px;width:400px;text-align:center;top:514.54px;line-height:12.287px;font-size:11px;font-weight:normal;color:#333;white-space:pre;">-</div>
<div style="position:absolute;left:1160.6px;top:521.44px;line-height:12.287px;font-size:11px;font-weight:bold;color:#111;white-space:pre;">Gauge</div>
<div style="position:absolute;left:461.1px;width:400px;text-align:right;top:559.97px;line-height:11.393px;font-size:10.2px;font-weight:bold;color:#111;white-space:pre;letter-spacing:-0.1px;">Dose Volume</div>
<div style="position:absolute;left:745.2px;top:578.2px;width:10.6px;height:10.6px;background:#fff;border:1px solid #333;"></div>
<div style="position:absolute;left:760.6px;top:577.34px;line-height:12.287px;font-size:11px;font-weight:bold;color:#ee1111;white-space:pre;letter-spacing:-0.1px;">Fixed Dose Volume</div>
<div style="position:absolute;left:869.7px;top:557.1px;width:96px;height:37.4px;background:#ffffff;border:1px solid #7a7a7a;"></div>
<div style="position:absolute;left:628.6px;width:400px;text-align:right;top:560.64px;line-height:12.287px;font-size:11px;font-weight:bold;color:#111;white-space:pre;">Weight</div>
<div style="position:absolute;left:1035.1px;top:557.1px;width:120.6px;height:20px;background:#f0f0f0;border:1px solid #7a7a7a;"></div>
<div style="position:absolute;left:895.3px;width:400px;text-align:center;top:560.25px;line-height:12.287px;font-size:11px;font-weight:normal;color:#222;white-space:pre;">8.04</div>
<div style="position:absolute;left:1218px;top:552.9px;width:87.7px;height:43.7px;background:#0000ff;border:2px solid #cfcfcf;outline:1px solid #a9a9a9;outline-offset:-1px;"></div>
<div style="position:absolute;left:1061.0px;width:400px;text-align:center;top:568.64px;line-height:12.287px;font-size:11px;font-weight:bold;color:#ffffff;white-space:pre;letter-spacing:-0.3px;">APPLY</div>
<div style="position:absolute;left:1312.3px;top:552.9px;width:87.7px;height:43.7px;background:#bf4000;border:2px solid #cfcfcf;outline:1px solid #a9a9a9;outline-offset:-1px;"></div>
<div style="position:absolute;left:1155.4px;width:400px;text-align:center;top:568.64px;line-height:12.287px;font-size:11px;font-weight:bold;color:#ffd800;white-space:pre;letter-spacing:-0.3px;">MODIFY</div>
<div style="position:absolute;left:749.5px;top:654.8px;width:555px;height:157.2px;background:#f0f0f0;border-left:1px solid #dadada;border-top:1px solid #e0e0e0;border-right:1px solid #e0e0e0;"></div>
<div style="position:absolute;left:874.6px;top:630.2px;width:120px;height:25px;background:#f0f0f0;border:1px solid #d9d9d9;border-bottom:none;"></div>
<div style="position:absolute;left:735.0px;width:400px;text-align:center;top:636.84px;line-height:12.287px;font-size:11px;font-weight:bold;color:#111;white-space:pre;">Female Notice</div>
<div style="position:absolute;left:749.5px;top:628.6px;width:125.1px;height:27px;background:#ffffff;border:1px solid #d9d9d9;border-bottom:none;"></div>
<div style="position:absolute;left:612.3px;width:400px;text-align:center;top:635.25px;line-height:12.287px;font-size:11px;font-weight:bold;color:#111;white-space:pre;">Male Notice</div>
<div style="position:absolute;left:466.5px;width:400px;text-align:right;top:677.75px;line-height:12.287px;font-size:11px;font-weight:bold;color:#111;white-space:pre;">Male Notice</div>
<div style="position:absolute;left:873.9px;top:673.3px;width:411px;height:113.1px;background:#ffffff;border:1px solid #8a8a8a;"></div>
<div style="position:absolute;left:1270.2px;top:674.3px;width:13.8px;height:111.1px;background:#f0f0f0;"></div>
<svg style="position:absolute;left:1271px;top:678px" width="12" height="106"><path d="M2 6.5 L5.6 3 L9.2 6.5" fill="none" stroke="#a0a0a0" stroke-width="1"/><path d="M2 98.5 L5.6 102 L9.2 98.5" fill="none" stroke="#a0a0a0" stroke-width="1"/></svg>
<div style="position:absolute;left:782px;top:743.2px;width:88.7px;height:42.6px;background:#e1e1e1;border:1px solid #adadad;"></div>
<div style="position:absolute;left:625.3px;width:400px;text-align:center;top:758.25px;line-height:12.287px;font-size:11px;font-weight:bold;color:#111;white-space:pre;transform:scaleX(0.935);">NOTICE SAVE</div>
</body></html>
